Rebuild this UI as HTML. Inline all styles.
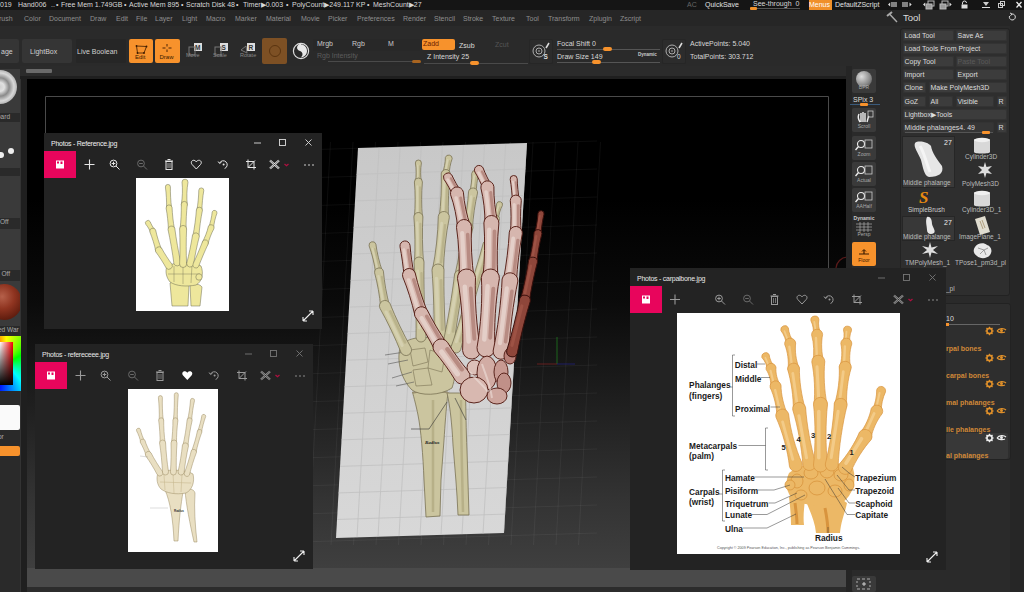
<!DOCTYPE html>
<html><head><meta charset="utf-8">
<style>
*{box-sizing:border-box;margin:0;padding:0}
html,body{width:1024px;height:592px;overflow:hidden;background:#2a2a2a;font-family:"Liberation Sans",sans-serif;color:#ccc}
.a{position:absolute}
.t{position:absolute;white-space:nowrap;line-height:1}
#top{left:0;top:0;width:1024px;height:10px;background:#151515}
#menu{left:0;top:10px;width:1024px;height:16px;background:#262626}
#tb{left:0;top:26px;width:1024px;height:40px;background:#2a2a2a}
#frame{left:20px;top:66px;width:832px;height:526px;background:#2c2c2c}
#canvas{left:27px;top:79px;width:820px;height:489px;background:linear-gradient(#000 0px,#000 120px,#0a0a0a 220px,#202020 330px,#333 420px,#3f3f3f 489px)}
#cbot{left:27px;top:568px;width:820px;height:19px;background:#4a4a4a}
.win{position:absolute;background:#232323}
.win .ttl{position:absolute;left:7px;top:6.5px;font-size:7px;letter-spacing:-0.25px;line-height:1;white-space:nowrap;color:#f2f2f2}
.win .pink{position:absolute;left:0;top:18px;width:32px;height:27px;background:#e8055c}
</style></head><body>

<div id="top" class="a">
 <div class="t" style="left:0;top:0.5px;font-size:7px;color:#d8d8d8">
 <span class="a" style="left:0">019</span><span class="a" style="left:18px">Hand006</span><span class="a" style="left:51px">..</span><span class="a" style="left:56px">&#8226;</span><span class="a" style="left:61px">Free Mem 1.749GB</span><span class="a" style="left:124px">&#8226;</span><span class="a" style="left:129px">Active Mem 895</span><span class="a" style="left:181px">&#8226;</span><span class="a" style="left:186px">Scratch Disk 48</span><span class="a" style="left:236px">&#8226;</span><span class="a" style="left:243px">Timer&#9654;0.003</span><span class="a" style="left:286px">&#8226;</span><span class="a" style="left:292px">PolyCount&#9654;249.117 KP</span><span class="a" style="left:367px">&#8226;</span><span class="a" style="left:373px">MeshCount&#9654;27</span>
 </div>
 <div class="t" style="left:687px;top:0.5px;font-size:7px;color:#666">AC</div>
 <div class="t" style="left:705px;top:0.5px;font-size:7px;color:#e0e0e0">QuickSave</div>
 <div class="t" style="left:753px;top:-0.5px;font-size:7px;color:#d8d8d8">See-through&nbsp;&nbsp;0</div>
 <div class="a" style="left:750px;top:8px;width:50px;height:1px;background:#555"></div>
 <div class="a" style="left:750px;top:7px;width:7px;height:3px;background:#f0902a;border-radius:1px"></div>
 <div class="a" style="left:809px;top:0;width:23px;height:10px;background:#f0902a"></div>
 <div class="t" style="left:809px;top:0.5px;font-size:7px;color:#fff">Menus</div>
 <div class="t" style="left:835px;top:0.5px;font-size:7px;color:#e0e0e0">DefaultZScript</div>
</div>
<div id="menu" class="a">
 <div class="t" style="left:0;top:4.5px;font-size:7px;color:#8e8e8e">
 <span class="a" style="left:-1px">rush</span><span class="a" style="left:24px">Color</span><span class="a" style="left:49px">Document</span><span class="a" style="left:90px">Draw</span><span class="a" style="left:116px">Edit</span><span class="a" style="left:136px">File</span><span class="a" style="left:155px">Layer</span><span class="a" style="left:182px">Light</span><span class="a" style="left:206px">Macro</span><span class="a" style="left:235px">Marker</span><span class="a" style="left:266px">Material</span><span class="a" style="left:301px">Movie</span><span class="a" style="left:328px">Picker</span><span class="a" style="left:357px">Preferences</span><span class="a" style="left:403px">Render</span><span class="a" style="left:434px">Stencil</span><span class="a" style="left:463px">Stroke</span><span class="a" style="left:492px">Texture</span><span class="a" style="left:526px">Tool</span><span class="a" style="left:548px">Transform</span><span class="a" style="left:589px">Zplugin</span><span class="a" style="left:620px">Zscript</span>
 </div>
</div>
<div id="tb" class="a"></div>
<div class="a" style="left:0;top:39px;width:19px;height:24px;background:#353535;border-radius:0 2px 2px 0"></div>
<div class="t" style="left:1px;top:48px;font-size:7px;color:#d0d0d0">age</div>
<div class="a" style="left:22px;top:39px;width:50px;height:24px;background:#353535;border-radius:2px"></div>
<div class="t" style="left:30px;top:48px;font-size:7px;color:#d0d0d0">LightBox</div>
<div class="a" style="left:76px;top:39px;width:50px;height:24px;background:#262626;border-radius:2px"></div>
<div class="t" style="left:77px;top:48px;font-size:7px;color:#d0d0d0">Live Boolean</div>
<div class="a" style="left:129px;top:39px;width:24px;height:24px;background:#f7922c;border-radius:2px"></div>
<div class="a" style="left:155px;top:39px;width:25px;height:24px;background:#f7922c;border-radius:2px"></div>
<svg class="a" style="left:129px;top:39px" width="51" height="24">
 <path d="M7.5 7 L17.5 7.5 L15 14 L8.5 14 Z" fill="none" stroke="#3a1a00" stroke-width="0.8"/><circle cx="7.5" cy="7" r="0.9" fill="#3a1a00"/><circle cx="17.5" cy="7.5" r="0.9" fill="#3a1a00"/><circle cx="15" cy="14" r="0.9" fill="#3a1a00"/><circle cx="8.5" cy="14" r="0.9" fill="#3a1a00"/>
 <text x="6" y="19.8" font-size="6" fill="#3a1a00" font-family="Liberation Sans">Edit</text>
 <path d="M38 5 V7.5 M38 10.5 V13 M33.5 9 H36.5 M39.5 9 H42.5" stroke="#3a1a00" stroke-width="0.9"/>
 <text x="30.5" y="19.8" font-size="6" fill="#3a1a00" font-family="Liberation Sans">Draw</text>
</svg>
<svg class="a" style="left:184px;top:40px" width="74" height="22">
 <rect x="10" y="3" width="8" height="8" fill="#ddd"/><text x="11" y="10" font-size="6.5" font-weight="bold" fill="#333" font-family="Liberation Sans">M</text>
 <rect x="5" y="7" width="6" height="8" fill="none" stroke="#777" stroke-width="1"/>
 <text x="2" y="17.3" font-size="5.5" fill="#888" font-family="Liberation Sans">Move</text>
 <rect x="36" y="3" width="8" height="8" fill="#ddd"/><text x="37.5" y="10" font-size="6.5" font-weight="bold" fill="#333" font-family="Liberation Sans">S</text>
 <rect x="31" y="7" width="6" height="8" fill="none" stroke="#777" stroke-width="1"/>
 <text x="29" y="17.3" font-size="5.5" fill="#888" font-family="Liberation Sans">Scale</text>
 <rect x="63" y="3" width="8" height="8" fill="#ddd"/><text x="64.5" y="10" font-size="6.5" font-weight="bold" fill="#333" font-family="Liberation Sans">R</text>
 <path d="M57 10 L62 6 L63 13 Z" fill="none" stroke="#777" stroke-width="1"/>
 <text x="56" y="17.3" font-size="5.5" fill="#888" font-family="Liberation Sans">Rotate</text>
</svg>
<div class="a" style="left:262px;top:38px;width:25px;height:26px;background:#7d5024;border-radius:2px"></div>
<div class="a" style="left:268.5px;top:44.5px;width:12px;height:12px;border:1px solid #5a3410;border-radius:50%"></div>
<svg class="a" style="left:292px;top:42px" width="18" height="18">
 <circle cx="9" cy="9" r="7.6" fill="#2a2a2a" stroke="#ddd" stroke-width="1.2"/>
 <path d="M9 2.5 C4 3.5 4.5 8 8 9 C11 10 11.5 14 8.5 15.5 C13 15 15 12 15 9 C15 5 12 2.5 9 2.5Z" fill="#e8e8e8"/>
 <path d="M9 2.5 C6 3 5.5 6 7 7.5" fill="none" stroke="#e8e8e8" stroke-width="2"/>
</svg>
<div class="a" style="left:313px;top:39px;width:107px;height:12px;background:#282828"></div>
<div class="t" style="left:317px;top:40.0px;font-size:7px;color:#c8c8c8">Mrgb</div>
<div class="t" style="left:352px;top:40.0px;font-size:7px;color:#c8c8c8">Rgb</div>
<div class="t" style="left:388px;top:40.0px;font-size:7px;color:#c8c8c8">M</div>
<div class="t" style="left:317px;top:52.0px;font-size:7px;color:#5c5c5c">Rgb Intensity</div>
<div class="a" style="left:328px;top:61px;width:92px;height:1px;background:#4a4a4a"></div>
<div class="a" style="left:412px;top:59.5px;width:9px;height:3.5px;background:#a86420;border-radius:2px"></div>
<div class="a" style="left:422px;top:39px;width:33px;height:11px;background:#f7922c;border-radius:2px"></div>
<div class="t" style="left:423px;top:40.0px;font-size:7px;color:#6a2000">Zadd</div>
<div class="t" style="left:459px;top:41.5px;font-size:7px;color:#dcdcdc">Zsub</div>
<div class="t" style="left:495px;top:40.5px;font-size:7px;color:#555">Zcut</div>
<div class="t" style="left:427px;top:53.0px;font-size:7px;color:#d8d8d8">Z Intensity 25</div>
<div class="a" style="left:424px;top:62.5px;width:104px;height:1px;background:#4a4a4a"></div>
<div class="a" style="left:470px;top:61px;width:9px;height:3.5px;background:#f7922c;border-radius:2px"></div>
<div class="a" style="left:529px;top:39px;width:24px;height:25px;background:#2c2c2c;border:1px solid #262626;border-radius:2px"></div>
<svg class="a" style="left:529px;top:39px" width="24" height="25">
 <circle cx="10" cy="12" r="6" fill="none" stroke="#bbb" stroke-width="0.9"/><circle cx="10" cy="12" r="3" fill="none" stroke="#bbb" stroke-width="0.9"/><circle cx="10" cy="12" r="0.8" fill="#bbb"/>
 <path d="M17 9 L20 4" stroke="#ddd" stroke-width="1.5"/>
 <text x="14.5" y="20" font-size="6.5" font-weight="bold" fill="#ddd" font-family="Liberation Sans">S</text>
</svg>
<div class="t" style="left:557px;top:40.0px;font-size:7px;color:#d8d8d8">Focal Shift 0</div>
<div class="a" style="left:557px;top:48.5px;width:103px;height:1px;background:#555"></div>
<div class="a" style="left:603px;top:47px;width:9px;height:3.5px;background:#f7922c;border-radius:2px"></div>
<div class="t" style="left:557px;top:53.0px;font-size:7px;color:#d8d8d8">Draw Size 149</div>
<div class="a" style="left:557px;top:61.5px;width:103px;height:1px;background:#555"></div>
<div class="a" style="left:592px;top:60px;width:9px;height:3.5px;background:#f7922c;border-radius:2px"></div>
<div class="t" style="left:638px;top:52.5px;font-size:4.5px;font-weight:bold;color:#ccc">Dynamic</div>
<div class="a" style="left:662px;top:39px;width:24px;height:25px;background:#2c2c2c;border:1px solid #262626;border-radius:2px"></div>
<svg class="a" style="left:662px;top:39px" width="24" height="25">
 <circle cx="10" cy="12" r="6" fill="none" stroke="#bbb" stroke-width="0.9"/><circle cx="10" cy="12" r="3" fill="none" stroke="#bbb" stroke-width="0.9"/><circle cx="10" cy="12" r="0.8" fill="#bbb"/>
 <path d="M17 9 L20 4" stroke="#ddd" stroke-width="1.5"/>
 <text x="15" y="20" font-size="6.5" fill="#ddd" font-family="Liberation Sans">0</text>
</svg>
<div class="t" style="left:690px;top:40.0px;font-size:7px;color:#d8d8d8">ActivePoints: 5.040</div>
<div class="t" style="left:690px;top:53.0px;font-size:7px;color:#d8d8d8">TotalPoints: 303.712</div>

<div id="frame" class="a"></div>
<div class="a" style="left:20px;top:66px;width:7px;height:526px;background:#1f1f1f;border-left:1px solid #333"></div>
<div class="a" style="left:20px;top:66px;width:832px;height:13px;background:#2b2b2b"></div>
<div class="a" style="left:26px;top:69px;width:26px;height:4px;background:#6a6a6a;border-radius:1px"></div>
<div class="a" style="left:20px;top:76px;width:832px;height:3px;background:#1f1f1f"></div>
<!-- left shelf -->
<div class="a" style="left:0;top:69px;width:20px;height:51px;background:#3a3a3a;overflow:hidden">
  <div class="a" style="left:-17px;top:1px;width:34px;height:34px;border-radius:50%;background:radial-gradient(circle at 50% 50%,#cfcfcf 0,#e0e0e0 18%,#8a8a8a 38%,#d8d8d8 58%,#9a9a9a 80%,#4a4a4a 100%)"></div>
  <div class="a" style="left:0;top:44px;width:20px;height:7px;background:#2a2a2a"></div>
  <div class="t" style="left:-3px;top:45px;font-size:6.5px;color:#aaa">oard</div>
</div>
<div class="a" style="left:0;top:122px;width:20px;height:52px;background:#3a3a3a;overflow:hidden">
  <div class="a" style="left:-2px;top:30px;width:6px;height:6px;border-radius:50%;background:#eee"></div>
  <div class="a" style="left:8px;top:26px;width:6px;height:6px;border-radius:50%;background:#eee"></div>
  <div class="a" style="left:0;top:46px;width:20px;height:6px;background:#2a2a2a"></div>
</div>
<div class="a" style="left:0;top:176px;width:20px;height:50px;background:#3a3a3a;overflow:hidden">
  <div class="a" style="left:0;top:42px;width:20px;height:8px;background:#2a2a2a"></div>
  <div class="t" style="left:0;top:43px;font-size:6.5px;color:#aaa">Off</div>
</div>
<div class="a" style="left:0;top:229px;width:20px;height:49px;background:#3a3a3a;overflow:hidden">
  <div class="a" style="left:0;top:41px;width:20px;height:8px;background:#2a2a2a"></div>
  <div class="t" style="left:-4px;top:42px;font-size:6.5px;color:#aaa">e Off</div>
</div>
<div class="a" style="left:0;top:281px;width:20px;height:54px;background:#3a3a3a;overflow:hidden">
  <div class="a" style="left:-14px;top:3px;width:36px;height:36px;border-radius:50%;background:radial-gradient(circle at 45% 35%,#b5604a 0,#8f3420 40%,#5a1a0c 80%,#3a3a3a 100%)"></div>
  <div class="a" style="left:0;top:45px;width:20px;height:9px;background:#2a2a2a"></div>
  <div class="t" style="left:-2px;top:46px;font-size:6.5px;color:#aaa">ed War</div>
</div>
<div class="a" style="left:0;top:336px;width:21px;height:55px;background:conic-gradient(from 0deg at 30% 50%,#ff0 0deg,#0f0 60deg,#0ff 140deg,#00f 200deg,#f0f 260deg,#f00 320deg,#ff0 360deg)"></div>
<div class="a" style="left:0;top:342px;width:13px;height:43px;background:linear-gradient(to bottom,transparent,#000),linear-gradient(to right,#fff,#f00)"></div>
<div class="a" style="left:0;top:405px;width:20px;height:25px;background:#fafafa;border-radius:0 2px 2px 0"></div>
<div class="t" style="left:-2px;top:434px;font-size:6.5px;color:#aaa">or</div>
<div class="a" style="left:0;top:446px;width:20px;height:10px;background:#f7922c;border-radius:0 2px 2px 0"></div>

<div id="canvas" class="a"></div>
<div id="cbot" class="a"></div>
<svg class="a" style="left:0;top:0" width="1024" height="592"><path d="M847 257 A12 12 0 0 0 836 268" fill="none" stroke="#5a1a1a" stroke-width="1.2"/><path d="M45.5 133V96.5H828.5V268" fill="none" stroke="#4a4a4a" stroke-width="1"/><path d="M330.5 142L308.5 545 M353.0 142L331.0 545 M375.5 142L353.5 545 M398.0 142L376.0 545 M420.5 142L398.5 545 M443.0 142L421.0 545 M465.5 142L443.5 545 M488.0 142L466.0 545 M510.5 142L488.5 545 M533.0 142L511.0 545 M555.5 142L533.5 545 M578.0 142L556.0 545 M600.5 142L578.5 545 M300 150.0L597 141.0 M300 178.0L597 169.0 M300 206.0L597 197.0 M300 234.0L597 225.0 M300 262.0L597 253.0 M300 290.0L597 281.0 M300 318.0L597 309.0 M300 346.0L597 337.0 M300 374.0L597 365.0 M300 402.0L597 393.0 M300 430.0L597 421.0 M300 458.0L597 449.0 M300 486.0L597 477.0 M300 514.0L597 505.0 M300 542.0L597 533.0" stroke="#ffffff" stroke-opacity="0.05" stroke-width="1" fill="none"/><path d="M557 337V364" stroke="#1f7a1f" stroke-width="0.8"/><path d="M537 364H557" stroke="#7a2222" stroke-width="0.8"/><path d="M557 364H575" stroke="#22227a" stroke-width="0.8"/><defs><linearGradient id="pg" x1="0" y1="0" x2="0" y2="1"><stop offset="0" stop-color="#c8c8c8"/><stop offset="1" stop-color="#d8d8d8"/></linearGradient><clipPath id="pc"><polygon points="358,148 527,143 504,533 336,538"/></clipPath></defs><polygon points="358,148 527,143 504,533 336,538" fill="url(#pg)"/><g clip-path="url(#pc)"><path d="M379.1 147.4L357.0 537.4 M400.2 146.8L378.0 536.8 M421.3 146.2L399.0 536.2 M442.4 145.6L420.0 535.6 M463.5 145.0L441.0 535.0 M484.6 144.4L462.0 534.4 M505.7 143.8L483.0 533.8 M526.8 143.2L504.0 533.2 M330 175.2L530 168.8 M330 201.7L530 195.3 M330 228.2L530 221.8 M330 254.7L530 248.3 M330 281.2L530 274.8 M330 307.7L530 301.3 M330 334.2L530 327.8 M330 360.7L530 354.3 M330 387.2L530 380.8 M330 413.7L530 407.3 M330 440.2L530 433.8 M330 466.7L530 460.3 M330 493.2L530 486.8 M330 519.7L530 513.3" stroke="#c0c0c0" stroke-width="0.8" fill="none"/><path d="M412.5 392 L448 392 C446 410 445 425 444 440 L441 480 L440 516 L426 517 L424 480 C423 455 421 430 418 415 C416 405 414 398 412.5 392 Z" fill="#cbc59f" stroke="#7a7254" stroke-width="0.8"/><path d="M447 393 L465.5 393 C466 410 466 430 467 450 L469 515 L458 515 C457 490 455 470 453 445 C452 425 450 405 447 393 Z" fill="#cbc59f" stroke="#7a7254" stroke-width="0.8"/><path d="M412.5 393 C425 390 440 390 448 393" stroke="#9a9070" stroke-width="1.5" fill="none"/><path d="M433 400 C433 430 433 470 433 512 M461 400 C461 430 462 470 463 512" stroke="#aaa27a" stroke-width="2.5" fill="none" opacity="0.6"/><path d="M401 345 C410 336 430 335 446 342 C456 350 458 370 452 388 C440 396 420 396 412 390 C400 378 396 358 401 345Z" fill="#cbc59f" stroke="#7a7254" stroke-width="0.8"/><path d="M410 350 L425 348 L428 362 L413 366Z M430 350 L445 355 L442 372 L428 368Z M413 370 L428 368 L432 385 L416 386Z" fill="none" stroke="#7a7254" stroke-width="0.6"/><path d="M385 355 L405 352 M388 364 L408 360 M392 378 L412 372 M396 386 L414 382" stroke="#555" stroke-width="0.6"/><path d="M369.1 245.8 C372.0 253.7 374.6 264.5 375.6 272.8 A3.5 3.5 0 0 0 382.4 271.2 C379.5 263.3 376.9 252.5 375.9 244.2 A3.5 3.5 0 0 0 369.1 245.8Z" fill="#cbc59f" stroke="#7a7254" stroke-width="0.8"/><line x1="374.8" y1="248.7" x2="379.4" y2="267.6" stroke="#aaa27a" stroke-width="1.5" stroke-linecap="round" opacity="0.5"/><line x1="372.4" y1="248.4" x2="377.4" y2="269.0" stroke="#dcd8bc" stroke-width="1.8" stroke-linecap="round" opacity="0.6"/><path d="M374.6 272.8 C377.4 282.8 379.8 296.4 380.6 306.8 A4.5 4.5 0 0 0 389.4 305.2 C386.6 295.2 384.2 281.6 383.4 271.2 A4.5 4.5 0 0 0 374.6 272.8Z" fill="#cbc59f" stroke="#7a7254" stroke-width="0.8"/><line x1="381.8" y1="276.8" x2="386.0" y2="300.6" stroke="#aaa27a" stroke-width="2.1" stroke-linecap="round" opacity="0.5"/><line x1="378.5" y1="276.3" x2="383.1" y2="302.1" stroke="#dcd8bc" stroke-width="2.4" stroke-linecap="round" opacity="0.6"/><path d="M380.0 308.4 C387.2 321.1 395.6 338.7 401.0 352.4 A5.5 5.5 0 0 0 411.0 347.6 C403.8 334.9 395.4 317.3 390.0 303.6 A5.5 5.5 0 0 0 380.0 308.4Z" fill="#cbc59f" stroke="#7a7254" stroke-width="0.8"/><line x1="390.4" y1="311.5" x2="405.1" y2="342.3" stroke="#aaa27a" stroke-width="2.7" stroke-linecap="round" opacity="0.5"/><line x1="386.1" y1="312.0" x2="402.1" y2="345.4" stroke="#dcd8bc" stroke-width="3.1" stroke-linecap="round" opacity="0.6"/><path d="M415.4 163.0 C416.4 168.7 416.4 176.3 415.4 182.0 A3.0 3.0 0 0 0 421.4 182.0 C420.4 176.3 420.4 168.7 421.4 163.0 A3.0 3.0 0 0 0 415.4 163.0Z" fill="#cbc59f" stroke="#7a7254" stroke-width="0.8"/><line x1="419.5" y1="165.8" x2="419.5" y2="179.2" stroke="#aaa27a" stroke-width="1.2" stroke-linecap="round" opacity="0.5"/><line x1="417.7" y1="165.3" x2="417.7" y2="179.7" stroke="#dcd8bc" stroke-width="1.4" stroke-linecap="round" opacity="0.6"/><path d="M414.4 182.0 C415.4 192.5 415.4 206.5 414.4 217.0 A4.0 4.0 0 0 0 422.4 217.0 C421.4 206.5 421.4 192.5 422.4 182.0 A4.0 4.0 0 0 0 414.4 182.0Z" fill="#cbc59f" stroke="#7a7254" stroke-width="0.8"/><line x1="420.0" y1="187.2" x2="420.0" y2="211.8" stroke="#aaa27a" stroke-width="1.8" stroke-linecap="round" opacity="0.5"/><line x1="417.3" y1="186.2" x2="417.3" y2="212.8" stroke="#dcd8bc" stroke-width="2.1" stroke-linecap="round" opacity="0.6"/><path d="M413.9 217.1 C415.1 230.5 415.3 248.5 414.5 262.1 A4.5 4.5 0 0 0 423.5 261.9 C422.3 248.5 422.1 230.5 422.9 216.9 A4.5 4.5 0 0 0 413.9 217.1Z" fill="#cbc59f" stroke="#7a7254" stroke-width="0.8"/><line x1="420.4" y1="223.7" x2="420.8" y2="255.2" stroke="#aaa27a" stroke-width="2.1" stroke-linecap="round" opacity="0.5"/><line x1="417.2" y1="222.4" x2="417.7" y2="256.6" stroke="#dcd8bc" stroke-width="2.4" stroke-linecap="round" opacity="0.6"/><path d="M414.0 262.1 C415.6 284.6 416.4 314.6 416.0 337.1 A5.0 5.0 0 0 0 426.0 336.9 C424.4 314.4 423.6 284.4 424.0 261.9 A5.0 5.0 0 0 0 414.0 262.1Z" fill="#cbc59f" stroke="#7a7254" stroke-width="0.8"/><line x1="421.5" y1="273.2" x2="422.9" y2="325.7" stroke="#aaa27a" stroke-width="2.4" stroke-linecap="round" opacity="0.5"/><line x1="417.8" y1="271.0" x2="419.4" y2="328.0" stroke="#dcd8bc" stroke-width="2.8" stroke-linecap="round" opacity="0.6"/><path d="M445.4 157.4 C445.4 162.3 444.2 168.7 442.4 173.4 A3.5 3.5 0 0 0 449.2 174.6 C449.2 169.7 450.4 163.3 452.2 158.6 A3.5 3.5 0 0 0 445.4 157.4Z" fill="#cbc59f" stroke="#7a7254" stroke-width="0.8"/><line x1="449.7" y1="160.7" x2="447.6" y2="171.9" stroke="#aaa27a" stroke-width="1.5" stroke-linecap="round" opacity="0.5"/><line x1="447.6" y1="159.8" x2="445.3" y2="171.9" stroke="#dcd8bc" stroke-width="1.8" stroke-linecap="round" opacity="0.6"/><path d="M441.3 173.8 C441.7 186.7 440.9 203.9 439.3 216.8 A4.5 4.5 0 0 0 448.3 217.2 C447.9 204.3 448.7 187.1 450.3 174.2 A4.5 4.5 0 0 0 441.3 173.8Z" fill="#cbc59f" stroke="#7a7254" stroke-width="0.8"/><line x1="447.4" y1="180.5" x2="446.0" y2="210.6" stroke="#aaa27a" stroke-width="2.1" stroke-linecap="round" opacity="0.5"/><line x1="444.3" y1="179.1" x2="442.8" y2="211.8" stroke="#dcd8bc" stroke-width="2.4" stroke-linecap="round" opacity="0.6"/><path d="M438.3 216.4 C438.1 232.5 435.8 253.7 432.5 269.4 A5.5 5.5 0 0 0 443.5 270.6 C443.7 254.5 446.0 233.3 449.3 217.6 A5.5 5.5 0 0 0 438.3 216.4Z" fill="#cbc59f" stroke="#7a7254" stroke-width="0.8"/><line x1="445.1" y1="225.2" x2="441.1" y2="262.3" stroke="#aaa27a" stroke-width="2.4" stroke-linecap="round" opacity="0.5"/><line x1="441.7" y1="223.2" x2="437.3" y2="263.5" stroke="#dcd8bc" stroke-width="2.8" stroke-linecap="round" opacity="0.6"/><path d="M432.0 270.2 C433.6 291.1 434.4 319.1 434.0 340.2 A6.0 6.0 0 0 0 446.0 339.8 C444.4 318.9 443.6 290.9 444.0 269.8 A6.0 6.0 0 0 0 432.0 270.2Z" fill="#cbc59f" stroke="#7a7254" stroke-width="0.8"/><line x1="441.0" y1="280.4" x2="442.4" y2="329.4" stroke="#aaa27a" stroke-width="3.0" stroke-linecap="round" opacity="0.5"/><line x1="436.5" y1="278.4" x2="438.0" y2="331.6" stroke="#dcd8bc" stroke-width="3.5" stroke-linecap="round" opacity="0.6"/><path d="M471.7 173.6 C472.1 179.3 471.2 186.7 469.5 192.1 A3.5 3.5 0 0 0 476.5 192.9 C476.1 187.2 477.0 179.8 478.7 174.4 A3.5 3.5 0 0 0 471.7 173.6Z" fill="#cbc59f" stroke="#7a7254" stroke-width="0.8"/><line x1="476.2" y1="176.9" x2="474.7" y2="189.9" stroke="#aaa27a" stroke-width="1.5" stroke-linecap="round" opacity="0.5"/><line x1="474.1" y1="176.1" x2="472.4" y2="190.2" stroke="#dcd8bc" stroke-width="1.8" stroke-linecap="round" opacity="0.6"/><path d="M468.5 191.9 C468.0 202.3 466.0 216.1 463.5 226.4 A4.5 4.5 0 0 0 472.5 227.6 C473.0 217.2 475.0 203.4 477.5 193.1 A4.5 4.5 0 0 0 468.5 191.9Z" fill="#cbc59f" stroke="#7a7254" stroke-width="0.8"/><line x1="474.2" y1="198.0" x2="470.7" y2="222.1" stroke="#aaa27a" stroke-width="2.1" stroke-linecap="round" opacity="0.5"/><line x1="471.2" y1="196.5" x2="467.4" y2="222.7" stroke="#dcd8bc" stroke-width="2.4" stroke-linecap="round" opacity="0.6"/><path d="M463.1 226.2 C461.7 240.7 458.5 259.9 455.1 274.2 A5.0 5.0 0 0 0 464.9 275.8 C466.3 261.3 469.5 242.1 472.9 227.8 A5.0 5.0 0 0 0 463.1 226.2Z" fill="#cbc59f" stroke="#7a7254" stroke-width="0.8"/><line x1="469.0" y1="234.6" x2="463.4" y2="268.2" stroke="#aaa27a" stroke-width="2.4" stroke-linecap="round" opacity="0.5"/><line x1="465.7" y1="232.5" x2="459.6" y2="269.0" stroke="#dcd8bc" stroke-width="2.8" stroke-linecap="round" opacity="0.6"/><path d="M454.6 274.1 C452.3 294.1 447.9 320.5 443.6 340.1 A5.5 5.5 0 0 0 454.4 341.9 C456.7 321.9 461.1 295.5 465.4 275.9 A5.5 5.5 0 0 0 454.6 274.1Z" fill="#cbc59f" stroke="#7a7254" stroke-width="0.8"/><line x1="460.8" y1="285.3" x2="453.1" y2="331.5" stroke="#aaa27a" stroke-width="2.7" stroke-linecap="round" opacity="0.5"/><line x1="457.1" y1="282.7" x2="448.8" y2="332.8" stroke="#dcd8bc" stroke-width="3.1" stroke-linecap="round" opacity="0.6"/><path d="M496.6 203.8 C496.4 208.3 494.8 214.0 492.6 218.0 A3.0 3.0 0 0 0 498.4 219.6 C498.6 215.1 500.2 209.4 502.4 205.4 A3.0 3.0 0 0 0 496.6 203.8Z" fill="#cbc59f" stroke="#7a7254" stroke-width="0.8"/><line x1="500.0" y1="207.0" x2="497.2" y2="217.0" stroke="#aaa27a" stroke-width="1.2" stroke-linecap="round" opacity="0.5"/><line x1="498.3" y1="206.1" x2="495.3" y2="216.9" stroke="#dcd8bc" stroke-width="1.4" stroke-linecap="round" opacity="0.6"/><path d="M491.7 217.6 C490.2 225.8 487.0 236.3 483.6 243.8 A4.0 4.0 0 0 0 491.2 246.2 C492.7 238.0 495.9 227.5 499.3 220.0 A4.0 4.0 0 0 0 491.7 217.6Z" fill="#cbc59f" stroke="#7a7254" stroke-width="0.8"/><line x1="495.9" y1="223.2" x2="490.2" y2="241.6" stroke="#aaa27a" stroke-width="1.8" stroke-linecap="round" opacity="0.5"/><line x1="493.5" y1="221.6" x2="487.4" y2="241.5" stroke="#dcd8bc" stroke-width="2.1" stroke-linecap="round" opacity="0.6"/><path d="M483.1 243.6 C478.8 260.4 471.9 282.4 465.7 298.6 A4.5 4.5 0 0 0 474.3 301.4 C478.6 284.6 485.5 262.6 491.7 246.4 A4.5 4.5 0 0 0 483.1 243.6Z" fill="#cbc59f" stroke="#7a7254" stroke-width="0.8"/><line x1="486.6" y1="253.8" x2="474.4" y2="292.3" stroke="#aaa27a" stroke-width="2.1" stroke-linecap="round" opacity="0.5"/><line x1="484.1" y1="251.2" x2="470.9" y2="293.0" stroke="#dcd8bc" stroke-width="2.4" stroke-linecap="round" opacity="0.6"/><path d="M465.2 298.6 C462.0 313.3 456.4 332.5 451.2 346.6 A5.0 5.0 0 0 0 460.8 349.4 C464.0 334.7 469.6 315.5 474.8 301.4 A5.0 5.0 0 0 0 465.2 298.6Z" fill="#cbc59f" stroke="#7a7254" stroke-width="0.8"/><line x1="470.0" y1="307.8" x2="460.2" y2="341.4" stroke="#aaa27a" stroke-width="2.4" stroke-linecap="round" opacity="0.5"/><line x1="467.0" y1="305.4" x2="456.3" y2="341.8" stroke="#dcd8bc" stroke-width="2.8" stroke-linecap="round" opacity="0.6"/><text x="425" y="444" font-size="5" font-family="Liberation Serif" font-style="italic" font-weight="bold" fill="#222">Radius</text><path d="M411 429H429L447 402 M455 398 L466 420" stroke="#333" stroke-width="0.6" fill="none"/></g><path d="M400.0 246.7 C401.7 255.3 403.3 266.9 404.0 275.7 A5.0 5.0 0 0 0 414.0 274.3 C412.3 265.7 410.7 254.1 410.0 245.3 A5.0 5.0 0 0 0 400.0 246.7Z" fill="#d6b6ae" stroke="#5a241c" stroke-width="1"/><line x1="408.1" y1="250.0" x2="410.9" y2="270.3" stroke="#9a6258" stroke-width="2.7" stroke-linecap="round" opacity="0.5"/><line x1="403.9" y1="249.7" x2="407.0" y2="271.7" stroke="#eee0da" stroke-width="3.1" stroke-linecap="round" opacity="0.6"/><path d="M402.8 277.0 C407.4 288.1 412.2 303.3 414.8 315.0 A6.5 6.5 0 0 0 427.2 311.0 C422.6 299.9 417.8 284.7 415.2 273.0 A6.5 6.5 0 0 0 402.8 277.0Z" fill="#d6b6ae" stroke="#5a241c" stroke-width="1"/><line x1="413.7" y1="279.8" x2="422.1" y2="306.4" stroke="#9a6258" stroke-width="3.3" stroke-linecap="round" opacity="0.5"/><line x1="408.6" y1="280.1" x2="417.7" y2="309.0" stroke="#eee0da" stroke-width="3.8" stroke-linecap="round" opacity="0.6"/><path d="M415.0 316.5 C421.8 326.2 429.8 339.8 435.0 350.5 A7.0 7.0 0 0 0 447.0 343.5 C440.2 333.8 432.2 320.2 427.0 309.5 A7.0 7.0 0 0 0 415.0 316.5Z" fill="#d6b6ae" stroke="#5a241c" stroke-width="1"/><line x1="426.8" y1="316.4" x2="440.8" y2="340.2" stroke="#9a6258" stroke-width="3.6" stroke-linecap="round" opacity="0.5"/><line x1="421.6" y1="318.1" x2="436.8" y2="344.0" stroke="#eee0da" stroke-width="4.2" stroke-linecap="round" opacity="0.6"/><path d="M434.5 351.7 C441.6 359.8 450.0 371.4 455.5 380.7 A8.0 8.0 0 0 0 468.5 371.3 C461.4 363.2 453.0 351.6 447.5 342.3 A8.0 8.0 0 0 0 434.5 351.7Z" fill="#d6b6ae" stroke="#5a241c" stroke-width="1"/><line x1="447.3" y1="349.1" x2="462.0" y2="369.4" stroke="#9a6258" stroke-width="4.2" stroke-linecap="round" opacity="0.5"/><line x1="441.5" y1="351.9" x2="457.5" y2="374.0" stroke="#eee0da" stroke-width="4.9" stroke-linecap="round" opacity="0.6"/><path d="M443.9 179.2 C447.1 183.9 450.7 190.5 453.1 195.7 A4.5 4.5 0 0 0 460.9 191.3 C457.7 186.6 454.1 180.0 451.7 174.8 A4.5 4.5 0 0 0 443.9 179.2Z" fill="#d6b6ae" stroke="#5a241c" stroke-width="1"/><line x1="451.1" y1="178.4" x2="457.5" y2="190.0" stroke="#9a6258" stroke-width="2.4" stroke-linecap="round" opacity="0.5"/><line x1="447.7" y1="179.7" x2="454.7" y2="192.2" stroke="#eee0da" stroke-width="2.8" stroke-linecap="round" opacity="0.6"/><path d="M450.6 194.8 C454.2 204.6 457.0 218.0 457.6 228.3 A6.5 6.5 0 0 0 470.4 225.7 C466.8 215.9 464.0 202.5 463.4 192.2 A6.5 6.5 0 0 0 450.6 194.8Z" fill="#d6b6ae" stroke="#5a241c" stroke-width="1"/><line x1="460.7" y1="198.0" x2="465.6" y2="221.4" stroke="#9a6258" stroke-width="3.0" stroke-linecap="round" opacity="0.5"/><line x1="456.1" y1="197.9" x2="461.4" y2="223.3" stroke="#eee0da" stroke-width="3.5" stroke-linecap="round" opacity="0.6"/><path d="M456.5 227.4 C458.8 242.6 459.8 263.0 459.0 278.4 A7.5 7.5 0 0 0 474.0 277.6 C471.7 262.4 470.7 242.0 471.5 226.6 A7.5 7.5 0 0 0 456.5 227.4Z" fill="#d6b6ae" stroke="#5a241c" stroke-width="1"/><line x1="467.7" y1="234.5" x2="469.4" y2="270.2" stroke="#9a6258" stroke-width="3.6" stroke-linecap="round" opacity="0.5"/><line x1="462.2" y1="233.2" x2="464.1" y2="272.0" stroke="#eee0da" stroke-width="4.2" stroke-linecap="round" opacity="0.6"/><path d="M457.5 278.6 C461.5 300.1 463.6 328.9 462.6 350.6 A9.0 9.0 0 0 0 480.6 349.4 C476.6 327.9 474.5 299.1 475.5 277.4 A9.0 9.0 0 0 0 457.5 278.6Z" fill="#d6b6ae" stroke="#5a241c" stroke-width="1"/><line x1="470.8" y1="288.5" x2="474.4" y2="338.9" stroke="#9a6258" stroke-width="3.9" stroke-linecap="round" opacity="0.5"/><line x1="464.8" y1="286.8" x2="468.7" y2="341.5" stroke="#eee0da" stroke-width="4.5" stroke-linecap="round" opacity="0.6"/><path d="M474.9 172.0 C477.9 177.0 481.3 183.9 483.3 189.4 A4.5 4.5 0 0 0 491.5 185.4 C488.5 180.4 485.1 173.5 483.1 168.0 A4.5 4.5 0 0 0 474.9 172.0Z" fill="#d6b6ae" stroke="#5a241c" stroke-width="1"/><line x1="482.2" y1="171.7" x2="488.1" y2="183.8" stroke="#9a6258" stroke-width="2.4" stroke-linecap="round" opacity="0.5"/><line x1="478.7" y1="172.7" x2="485.1" y2="185.9" stroke="#eee0da" stroke-width="2.8" stroke-linecap="round" opacity="0.6"/><path d="M480.9 188.1 C483.6 198.6 485.2 212.9 484.9 223.7 A6.5 6.5 0 0 0 497.9 222.3 C495.2 211.8 493.6 197.5 493.9 186.7 A6.5 6.5 0 0 0 480.9 188.1Z" fill="#d6b6ae" stroke="#5a241c" stroke-width="1"/><line x1="490.7" y1="192.4" x2="493.5" y2="217.4" stroke="#9a6258" stroke-width="3.0" stroke-linecap="round" opacity="0.5"/><line x1="486.1" y1="191.9" x2="489.2" y2="218.9" stroke="#eee0da" stroke-width="3.5" stroke-linecap="round" opacity="0.6"/><path d="M483.9 222.9 C485.1 239.4 484.7 261.4 482.9 277.9 A7.5 7.5 0 0 0 497.9 278.1 C496.7 261.6 497.1 239.6 498.9 223.1 A7.5 7.5 0 0 0 483.9 222.9Z" fill="#d6b6ae" stroke="#5a241c" stroke-width="1"/><line x1="494.5" y1="231.3" x2="493.8" y2="269.8" stroke="#9a6258" stroke-width="3.6" stroke-linecap="round" opacity="0.5"/><line x1="489.2" y1="229.6" x2="488.4" y2="271.4" stroke="#eee0da" stroke-width="4.2" stroke-linecap="round" opacity="0.6"/><path d="M481.4 277.4 C482.6 298.6 480.8 326.6 477.0 347.4 A9.0 9.0 0 0 0 495.0 348.6 C493.8 327.4 495.6 299.4 499.4 278.6 A9.0 9.0 0 0 0 481.4 277.4Z" fill="#d6b6ae" stroke="#5a241c" stroke-width="1"/><line x1="493.3" y1="288.7" x2="490.2" y2="337.7" stroke="#9a6258" stroke-width="3.9" stroke-linecap="round" opacity="0.5"/><line x1="487.6" y1="286.3" x2="484.3" y2="339.5" stroke="#eee0da" stroke-width="4.5" stroke-linecap="round" opacity="0.6"/><path d="M510.2 179.3 C511.3 185.8 512.2 194.4 512.3 200.9 A3.5 3.5 0 0 0 519.3 200.3 C518.2 193.8 517.3 185.2 517.2 178.7 A3.5 3.5 0 0 0 510.2 179.3Z" fill="#d6b6ae" stroke="#5a241c" stroke-width="1"/><line x1="515.7" y1="182.1" x2="517.1" y2="197.2" stroke="#9a6258" stroke-width="1.8" stroke-linecap="round" opacity="0.5"/><line x1="512.9" y1="181.7" x2="514.5" y2="198.1" stroke="#eee0da" stroke-width="2.1" stroke-linecap="round" opacity="0.6"/><path d="M510.3 200.6 C511.3 210.3 511.3 223.3 510.3 233.0 A5.5 5.5 0 0 0 521.3 233.0 C520.3 223.3 520.3 210.3 521.3 200.6 A5.5 5.5 0 0 0 510.3 200.6Z" fill="#d6b6ae" stroke="#5a241c" stroke-width="1"/><line x1="518.3" y1="205.5" x2="518.3" y2="228.1" stroke="#9a6258" stroke-width="2.7" stroke-linecap="round" opacity="0.5"/><line x1="514.2" y1="204.5" x2="514.2" y2="229.1" stroke="#eee0da" stroke-width="3.1" stroke-linecap="round" opacity="0.6"/><path d="M509.3 232.2 C508.6 246.4 506.3 265.2 503.5 279.2 A6.5 6.5 0 0 0 516.5 280.8 C517.2 266.6 519.5 247.8 522.3 233.8 A6.5 6.5 0 0 0 509.3 232.2Z" fill="#d6b6ae" stroke="#5a241c" stroke-width="1"/><line x1="517.9" y1="240.4" x2="513.9" y2="273.3" stroke="#9a6258" stroke-width="3.3" stroke-linecap="round" opacity="0.5"/><line x1="513.2" y1="238.4" x2="508.8" y2="274.1" stroke="#eee0da" stroke-width="3.8" stroke-linecap="round" opacity="0.6"/><path d="M502.1 279.0 C501.3 300.9 497.7 329.7 493.1 351.0 A8.0 8.0 0 0 0 508.9 353.0 C509.7 331.1 513.3 302.3 517.9 281.0 A8.0 8.0 0 0 0 502.1 279.0Z" fill="#d6b6ae" stroke="#5a241c" stroke-width="1"/><line x1="511.9" y1="291.2" x2="505.6" y2="341.6" stroke="#9a6258" stroke-width="3.6" stroke-linecap="round" opacity="0.5"/><line x1="506.8" y1="288.4" x2="500.0" y2="343.1" stroke="#eee0da" stroke-width="4.2" stroke-linecap="round" opacity="0.6"/><ellipse cx="510" cy="356" rx="6" ry="8" fill="#b88078" stroke="#5a241c" stroke-width="1"/><ellipse cx="474.5" cy="367.5" rx="7.5" ry="7.5" fill="#dcc0b8" stroke="#5a241c" stroke-width="1"/><ellipse cx="487" cy="373" rx="10" ry="17" fill="#d2aca4" stroke="#5a241c" stroke-width="1"/><ellipse cx="501" cy="372" rx="7" ry="12" fill="#c89a92" stroke="#5a241c" stroke-width="1"/><ellipse cx="504" cy="383" rx="7" ry="10" fill="#c09088" stroke="#5a241c" stroke-width="1"/><ellipse cx="497" cy="396" rx="10" ry="8" fill="#cea69e" stroke="#5a241c" stroke-width="1"/><ellipse cx="474" cy="390" rx="14" ry="13" fill="#d8b8b0" stroke="#5a241c" stroke-width="1"/><path d="M470 372 C476 380 484 386 488 392 M482 364 C486 376 490 384 492 398" stroke="#eee0da" stroke-width="2" opacity="0.6" fill="none"/><path d="M538.0 213.2 C537.6 219.1 536.4 226.8 535.0 232.5 A3.0 3.0 0 0 0 541.0 233.5 C541.4 227.6 542.6 219.9 544.0 214.2 A3.0 3.0 0 0 0 538.0 213.2Z" fill="#8e463a" stroke="#3a100c" stroke-width="1"/><line x1="539.8" y1="215.9" x2="537.5" y2="230.5" stroke="#a85a4c" stroke-width="1.8" stroke-linecap="round" opacity="0.6"/><path d="M534.1 232.3 C533.3 241.0 531.3 252.3 529.1 260.7 A4.0 4.0 0 0 0 536.9 262.1 C537.7 253.4 539.7 242.1 541.9 233.7 A4.0 4.0 0 0 0 534.1 232.3Z" fill="#8e463a" stroke="#3a100c" stroke-width="1"/><line x1="536.3" y1="236.2" x2="532.5" y2="257.8" stroke="#a85a4c" stroke-width="2.3" stroke-linecap="round" opacity="0.6"/><path d="M528.6 260.5 C526.9 272.2 523.7 287.7 520.6 299.1 A4.5 4.5 0 0 0 529.4 300.9 C531.1 289.2 534.3 273.7 537.4 262.3 A4.5 4.5 0 0 0 528.6 260.5Z" fill="#8e463a" stroke="#3a100c" stroke-width="1"/><line x1="530.8" y1="265.8" x2="524.7" y2="295.1" stroke="#a85a4c" stroke-width="2.6" stroke-linecap="round" opacity="0.6"/><path d="M519.7 298.7 C516.7 314.5 511.5 335.3 506.7 350.7 A5.5 5.5 0 0 0 517.3 353.3 C520.3 337.5 525.5 316.7 530.3 301.3 A5.5 5.5 0 0 0 519.7 298.7Z" fill="#8e463a" stroke="#3a100c" stroke-width="1"/><line x1="521.9" y1="305.9" x2="512.0" y2="345.4" stroke="#a85a4c" stroke-width="3.1" stroke-linecap="round" opacity="0.6"/></svg>
<div class="a" style="left:876px;top:26px;width:148px;height:566px;background:#2a2a2a"></div><div class="a" style="left:1010px;top:26px;width:14px;height:566px;background:#262626"></div><div class="a" style="left:846px;top:66px;width:6px;height:526px;background:#252525"></div><div class="t" style="left:903px;top:13px;font-size:9.5px;color:#dedede">Tool</div><svg class="a" style="left:1007px;top:12px" width="10" height="10"><path d="M2.5 4 A3 3 0 1 0 5 2" fill="none" stroke="#ddd" stroke-width="1"/><path d="M3 1 L5 2 L3.5 3.8" fill="none" stroke="#ddd" stroke-width="1"/></svg><svg class="a" style="left:880px;top:0" width="144" height="10"><path d="M8 4.5l2.2-2v4z" fill="#ddd"/><path d="M12 2v5M14 2v5M16 2v5" stroke="#ccc" stroke-width="1.2"/><path d="M23 2v5M25 2v5M27 2v5" stroke="#ccc" stroke-width="1.2"/><path d="M29.5 2.5l2.2 2-2.2 2z" fill="#ddd"/><path d="M43 4.5l2.2-2v4z" fill="#ddd"/><rect x="48" y="1" width="6" height="5" fill="none" stroke="#bbb" stroke-width="1"/><rect x="46" y="4" width="6" height="5" fill="#999" stroke="#bbb" stroke-width="1"/><rect x="62" y="1" width="6" height="5" fill="none" stroke="#bbb" stroke-width="1"/><rect x="60" y="4" width="6" height="5" fill="#999" stroke="#bbb" stroke-width="1"/><path d="M69.5 2.5l2.2 2-2.2 2z" fill="#ddd"/><path d="M82.5 4.5V3A2 2 0 0 1 86.5 3" fill="none" stroke="#ddd" stroke-width="1"/><rect x="81.5" y="4.5" width="6" height="4" fill="#ddd"/><path d="M102 7.5h8" stroke="#ddd" stroke-width="1"/><path d="M103 2h6l-3 4z" fill="#ccc"/><rect x="118.5" y="3.5" width="4" height="4" fill="none" stroke="#ccc"/><rect x="120.5" y="1.5" width="4" height="4" fill="none" stroke="#ccc"/><path d="M136.5 2l5 5.5M141.5 2l-5 5.5" stroke="#eee" stroke-width="1.3"/></svg><svg class="a" style="left:885px;top:10px" width="16" height="16"><path d="M2 6 L7 2" stroke="#aaa" stroke-width="2"/><path d="M4.5 4 L12 12" stroke="#aaa" stroke-width="1.4"/></svg><div class="a" style="left:900px;top:28px;width:110px;height:268px;background:#2e2e2e;border:1px solid #222;border-radius:3px"></div><div class="a" style="left:903px;top:30px;width:51px;height:11px;background:#3c3c3c;border-radius:2px;box-shadow:inset 0 0 0 1px #333"></div><div class="t" style="left:904.5px;top:32px;font-size:7px;color:#dcdcdc">Load Tool</div><div class="a" style="left:956px;top:30px;width:51px;height:11px;background:#3c3c3c;border-radius:2px;box-shadow:inset 0 0 0 1px #333"></div><div class="t" style="left:957.5px;top:32px;font-size:7px;color:#dcdcdc">Save As</div><div class="a" style="left:903px;top:43px;width:104px;height:11px;background:#3c3c3c;border-radius:2px;box-shadow:inset 0 0 0 1px #333"></div><div class="t" style="left:904.5px;top:45px;font-size:7px;color:#dcdcdc">Load Tools From Project</div><div class="a" style="left:903px;top:56px;width:51px;height:11px;background:#3c3c3c;border-radius:2px;box-shadow:inset 0 0 0 1px #333"></div><div class="t" style="left:904.5px;top:58px;font-size:7px;color:#dcdcdc">Copy Tool</div><div class="a" style="left:956px;top:56px;width:51px;height:11px;background:#3c3c3c;border-radius:2px;box-shadow:inset 0 0 0 1px #333"></div><div class="t" style="left:957.5px;top:58px;font-size:7px;color:#5a5a5a">Paste Tool</div><div class="a" style="left:903px;top:69px;width:51px;height:11px;background:#3c3c3c;border-radius:2px;box-shadow:inset 0 0 0 1px #333"></div><div class="t" style="left:904.5px;top:71px;font-size:7px;color:#dcdcdc">Import</div><div class="a" style="left:956px;top:69px;width:51px;height:11px;background:#3c3c3c;border-radius:2px;box-shadow:inset 0 0 0 1px #333"></div><div class="t" style="left:957.5px;top:71px;font-size:7px;color:#dcdcdc">Export</div><div class="a" style="left:903px;top:82px;width:23px;height:11px;background:#3c3c3c;border-radius:2px;box-shadow:inset 0 0 0 1px #333"></div><div class="t" style="left:904.5px;top:84px;font-size:7px;color:#dcdcdc">Clone</div><div class="a" style="left:929px;top:82px;width:78px;height:11px;background:#3c3c3c;border-radius:2px;box-shadow:inset 0 0 0 1px #333"></div><div class="t" style="left:930.5px;top:84px;font-size:7px;color:#dcdcdc">Make PolyMesh3D</div><div class="a" style="left:903px;top:96px;width:23px;height:11px;background:#3c3c3c;border-radius:2px;box-shadow:inset 0 0 0 1px #333"></div><div class="t" style="left:904.5px;top:98px;font-size:7px;color:#dcdcdc">GoZ</div><div class="a" style="left:929px;top:96px;width:24px;height:11px;background:#3c3c3c;border-radius:2px;box-shadow:inset 0 0 0 1px #333"></div><div class="t" style="left:930.5px;top:98px;font-size:7px;color:#dcdcdc">All</div><div class="a" style="left:956px;top:96px;width:38px;height:11px;background:#3c3c3c;border-radius:2px;box-shadow:inset 0 0 0 1px #333"></div><div class="t" style="left:957.5px;top:98px;font-size:7px;color:#dcdcdc">Visible</div><div class="a" style="left:997px;top:96px;width:10px;height:11px;background:#3c3c3c;border-radius:2px;box-shadow:inset 0 0 0 1px #333"></div><div class="t" style="left:998.5px;top:98px;font-size:7px;color:#dcdcdc">R</div><div class="a" style="left:903px;top:109px;width:104px;height:11px;background:#3c3c3c;border-radius:2px;box-shadow:inset 0 0 0 1px #333"></div><div class="t" style="left:904.5px;top:111px;font-size:7px;color:#dcdcdc">Lightbox&#9654;Tools</div><div class="a" style="left:903px;top:122px;width:91px;height:11px;background:#363636;border-radius:2px;box-shadow:inset 0 0 0 1px #333"></div><div class="t" style="left:904.5px;top:124px;font-size:7px;color:#dcdcdc">Middle phalanges4. 49</div><div class="a" style="left:997px;top:122px;width:10px;height:11px;background:#3c3c3c;border-radius:2px;box-shadow:inset 0 0 0 1px #333"></div><div class="t" style="left:998.5px;top:124px;font-size:7px;color:#dcdcdc">R</div><div class="a" style="left:905px;top:132px;width:88px;height:1px;background:#555"></div><div class="a" style="left:982px;top:131px;width:8px;height:3px;background:#f7922c;border-radius:1px"></div><div class="a" style="left:902px;top:136px;width:53px;height:52px;background:#3a3a3a;border:1px solid #262626"></div><svg class="a" style="left:902px;top:136px" width="53" height="52"><path d="M13 7 C16 4 26 6 29 10 C30 17 35 23 40 30 C42 37 37 41 27 41 C22 40 21 31 19 24 C17 18 11 11 13 7Z" fill="#e6e6e6"/><path d="M18 10 C22 16 24 26 28 36" stroke="#ffffff" stroke-width="3" fill="none" opacity="0.6"/></svg><div class="t" style="left:944px;top:139px;font-size:7px;color:#eee">27</div><div class="t" style="left:903px;top:180px;font-size:6.5px;color:#bbb">Middle phalange</div><svg class="a" style="left:970px;top:136px" width="24" height="20"><path d="M4 4 C4 2 20 2 20 4 V16 C20 18 4 18 4 16Z" fill="#d8d8d8"/><ellipse cx="12" cy="4" rx="8" ry="2.2" fill="#f0f0f0"/></svg><div class="t" style="left:965px;top:154px;font-size:6.5px;color:#bbb">Cylinder3D</div><svg class="a" style="left:978px;top:162px" width="14" height="16"><path d="M7 0 L8.5 5 L14 4 L10 8 L14 12 L8.5 11 L7 16 L5.5 11 L0 12 L4 8 L0 4 L5.5 5Z" fill="#ddd"/></svg><div class="t" style="left:962px;top:180.5px;font-size:6.5px;color:#bbb">PolyMesh3D</div><div class="t" style="left:919px;top:189px;font-size:17px;font-weight:bold;font-style:italic;color:#e88a10;font-family:'Liberation Serif',serif">S</div><div class="t" style="left:908px;top:207px;font-size:6.5px;color:#ccc">SimpleBrush</div><svg class="a" style="left:970px;top:189px" width="24" height="20"><path d="M4 4 C4 2 20 2 20 4 V16 C20 18 4 18 4 16Z" fill="#d8d8d8"/><ellipse cx="12" cy="4" rx="8" ry="2.2" fill="#f0f0f0"/></svg><div class="t" style="left:962px;top:207px;font-size:6.5px;color:#bbb">Cylinder3D_1</div><div class="a" style="left:902px;top:216px;width:53px;height:25px;background:#383838;border:1px solid #262626"></div><svg class="a" style="left:922px;top:216px" width="16" height="20"><path d="M5 1 C8 0 10 3 10 8 C11 12 14 15 12 17 C9 19 5 18 5 14 C5 10 3 5 5 1Z" fill="#e8e8e8"/></svg><div class="t" style="left:944px;top:219px;font-size:7px;color:#eee">27</div><div class="t" style="left:903px;top:234px;font-size:6.5px;color:#bbb">Middle phalange</div><svg class="a" style="left:972px;top:215px" width="20" height="22"><path d="M3 4 L13 1 L18 17 L8 20Z" fill="#e0ddd0"/><path d="M8 6 L11 14 M10 5 L13 13" stroke="#b0a080" stroke-width="1"/></svg><div class="t" style="left:959px;top:234px;font-size:6.5px;color:#bbb">ImagePlane_1</div><svg class="a" style="left:922px;top:242px" width="16" height="16"><path d="M8 0 L9.5 5.5 L16 4 L11 8 L16 12 L9.5 10.5 L8 16 L6.5 10.5 L0 12 L5 8 L0 4 L6.5 5.5Z" fill="#ddd"/></svg><div class="t" style="left:905px;top:260px;font-size:6.5px;color:#bbb">TMPolyMesh_1</div><svg class="a" style="left:972px;top:242px" width="22" height="17"><path d="M3 5 C5 1 12 0 15 3 C19 4 21 9 18 13 C15 17 8 17 5 14 C1 11 1 8 3 5Z" fill="#e8e8e8"/><path d="M6 6 L12 8 L16 6 M8 12 L12 8 L14 13" stroke="#888" stroke-width="0.8" fill="none"/></svg><div class="t" style="left:955px;top:260px;font-size:6.5px;color:#bbb">TPose1_pm3d_pl</div><div class="t" style="left:946px;top:286px;font-size:6.5px;color:#bbb">_pl</div><div class="a" style="left:900px;top:303px;width:111px;height:157px;background:#2e2e2e;border:1px solid #222;border-radius:3px"></div><div class="t" style="left:946px;top:315px;font-size:7px;color:#ddd">10</div><div class="a" style="left:946px;top:324px;width:54px;height:1px;background:#666"></div><div class="a" style="left:946px;top:323px;width:3px;height:3px;background:#f7922c"></div><div class="a" style="left:946px;top:433px;width:62px;height:26px;background:#383838;border-radius:2px"></div><div class="t" style="left:946px;top:345px;font-size:7px;font-weight:bold;color:#d08838">rpal bones</div><div class="t" style="left:946px;top:372px;font-size:7px;font-weight:bold;color:#d08838">carpal bones</div><div class="t" style="left:946px;top:399px;font-size:7px;font-weight:bold;color:#d08838">mal phalanges</div><div class="t" style="left:946px;top:425.5px;font-size:7px;font-weight:bold;color:#d08838">lle phalanges</div><div class="t" style="left:946px;top:452px;font-size:7px;font-weight:bold;color:#d08838">al phalanges</div><svg class="a" style="left:984px;top:326px" width="24" height="10"><circle cx="5.5" cy="5" r="2.6" fill="none" stroke="#e0902a" stroke-width="1.6"/><path d="M5.5 0.8v1.6M5.5 7.6v1.6M1.3 5h1.6M8.1 5h1.6M2.5 2l1.1 1.1M7.4 6.9l1.1 1.1M2.5 8l1.1-1.1M7.4 3.1l1.1-1.1" stroke="#e0902a" stroke-width="1.2"/><path d="M13 5 C15 2 20 2 22 4 M13 5 C15 7 19 7 21 6" fill="none" stroke="#e0902a" stroke-width="1.1"/><circle cx="17.5" cy="4.6" r="1.5" fill="#e0902a"/></svg><svg class="a" style="left:984px;top:352.5px" width="24" height="10"><circle cx="5.5" cy="5" r="2.6" fill="none" stroke="#e0902a" stroke-width="1.6"/><path d="M5.5 0.8v1.6M5.5 7.6v1.6M1.3 5h1.6M8.1 5h1.6M2.5 2l1.1 1.1M7.4 6.9l1.1 1.1M2.5 8l1.1-1.1M7.4 3.1l1.1-1.1" stroke="#e0902a" stroke-width="1.2"/><path d="M13 5 C15 2 20 2 22 4 M13 5 C15 7 19 7 21 6" fill="none" stroke="#e0902a" stroke-width="1.1"/><circle cx="17.5" cy="4.6" r="1.5" fill="#e0902a"/></svg><svg class="a" style="left:984px;top:379px" width="24" height="10"><circle cx="5.5" cy="5" r="2.6" fill="none" stroke="#e0902a" stroke-width="1.6"/><path d="M5.5 0.8v1.6M5.5 7.6v1.6M1.3 5h1.6M8.1 5h1.6M2.5 2l1.1 1.1M7.4 6.9l1.1 1.1M2.5 8l1.1-1.1M7.4 3.1l1.1-1.1" stroke="#e0902a" stroke-width="1.2"/><path d="M13 5 C15 2 20 2 22 4 M13 5 C15 7 19 7 21 6" fill="none" stroke="#e0902a" stroke-width="1.1"/><circle cx="17.5" cy="4.6" r="1.5" fill="#e0902a"/></svg><svg class="a" style="left:984px;top:406px" width="24" height="10"><circle cx="5.5" cy="5" r="2.6" fill="none" stroke="#e0902a" stroke-width="1.6"/><path d="M5.5 0.8v1.6M5.5 7.6v1.6M1.3 5h1.6M8.1 5h1.6M2.5 2l1.1 1.1M7.4 6.9l1.1 1.1M2.5 8l1.1-1.1M7.4 3.1l1.1-1.1" stroke="#e0902a" stroke-width="1.2"/><path d="M13 5 C15 2 20 2 22 4 M13 5 C15 7 19 7 21 6" fill="none" stroke="#e0902a" stroke-width="1.1"/><circle cx="17.5" cy="4.6" r="1.5" fill="#e0902a"/></svg><svg class="a" style="left:984px;top:432.5px" width="24" height="10"><circle cx="5.5" cy="5" r="2.6" fill="none" stroke="#eeeeee" stroke-width="1.6"/><path d="M5.5 0.8v1.6M5.5 7.6v1.6M1.3 5h1.6M8.1 5h1.6M2.5 2l1.1 1.1M7.4 6.9l1.1 1.1M2.5 8l1.1-1.1M7.4 3.1l1.1-1.1" stroke="#eeeeee" stroke-width="1.2"/><path d="M13 5 C15 2 20 2 22 4 M13 5 C15 7 19 7 21 6" fill="none" stroke="#eeeeee" stroke-width="1.1"/><circle cx="17.5" cy="4.6" r="1.5" fill="#eeeeee"/></svg><div class="a" style="left:852px;top:69px;width:24px;height:24px;background:#3a3a3a;border-radius:2px"></div><div class="a" style="left:856px;top:71px;width:16px;height:16px;border-radius:50%;background:radial-gradient(circle at 35% 35%,#ddd,#888 60%,#444)"></div><div class="t" style="left:852px;width:24px;text-align:center;top:85px;font-size:5px;color:#aaa">BPR</div><div class="t" style="left:853px;top:96px;font-size:7px;color:#ddd">SPix 3</div><div class="a" style="left:850px;top:104px;width:30px;height:1px;background:#3a5a7a"></div><div class="a" style="left:860px;top:103px;width:8px;height:3px;background:#f7922c;border-radius:1px"></div><div class="a" style="left:852px;top:108px;width:24px;height:24px;background:#3a3a3a;border-radius:2px"></div><div class="t" style="left:852px;width:24px;text-align:center;top:124px;font-size:5px;color:#aaa">Scroll</div><svg class="a" style="left:856px;top:110px" width="18" height="14"><path d="M4 12 C2 9 2 6 3 4 M5 12 V3 M7 12 V2 M9 12 V3 M11 12 C12 9 12 7 13 6" stroke="#eee" stroke-width="1.4" fill="none"/><rect x="12" y="1" width="5" height="6" fill="none" stroke="#ccc" stroke-width="0.8"/></svg><div class="a" style="left:852px;top:136px;width:24px;height:24px;background:#3a3a3a;border-radius:2px"></div><div class="t" style="left:852px;width:24px;text-align:center;top:152px;font-size:5px;color:#aaa">Zoom</div><svg class="a" style="left:855px;top:138px" width="18" height="14"><circle cx="6" cy="6" r="3.5" fill="none" stroke="#eee" stroke-width="1.1"/><path d="M3.5 8.5 L0.5 12" stroke="#eee" stroke-width="1.4"/><rect x="10" y="2" width="7" height="8" fill="none" stroke="#ccc" stroke-width="0.8"/></svg><div class="a" style="left:852px;top:162px;width:24px;height:24px;background:#3a3a3a;border-radius:2px"></div><div class="t" style="left:852px;width:24px;text-align:center;top:178px;font-size:5px;color:#aaa">Actual</div><svg class="a" style="left:855px;top:164px" width="18" height="14"><circle cx="6" cy="6" r="3.5" fill="none" stroke="#eee" stroke-width="1.1"/><path d="M3.5 8.5 L0.5 12" stroke="#eee" stroke-width="1.4"/><rect x="10" y="2" width="7" height="8" fill="none" stroke="#ccc" stroke-width="0.8"/></svg><div class="a" style="left:852px;top:188px;width:24px;height:24px;background:#3a3a3a;border-radius:2px"></div><div class="t" style="left:852px;width:24px;text-align:center;top:204px;font-size:5px;color:#aaa">AAHalf</div><svg class="a" style="left:855px;top:190px" width="18" height="14"><circle cx="6" cy="6" r="3.5" fill="none" stroke="#eee" stroke-width="1.1"/><path d="M3.5 8.5 L0.5 12" stroke="#eee" stroke-width="1.4"/><rect x="10" y="2" width="7" height="8" fill="none" stroke="#ccc" stroke-width="0.8"/></svg><div class="t" style="left:852px;top:216px;width:24px;text-align:center;font-size:5px;font-weight:bold;color:#ccc">Dynamic</div><svg class="a" style="left:855px;top:222px" width="18" height="10"><path d="M1 2h16M1 5h16M1 8h16M5 0v10M9 0v10M13 0v10" stroke="#aaa" stroke-width="0.7"/></svg><div class="t" style="left:852px;top:232px;width:24px;text-align:center;font-size:5px;color:#aaa">Persp</div><div class="a" style="left:852px;top:242px;width:24px;height:24px;background:#f7922c;border-radius:2px"></div><svg class="a" style="left:852px;top:242px" width="24" height="24"><path d="M7 12 H17 M12 8 V12" stroke="#3a1a00" stroke-width="1.2"/><path d="M10 9.5 L12 7.5 L14 9.5" fill="none" stroke="#3a1a00" stroke-width="1"/></svg><div class="t" style="left:852px;top:258px;width:24px;text-align:center;font-size:5px;color:#3a1a00">Floor</div><div class="a" style="left:852px;top:576px;width:24px;height:16px;background:#3a3a3a;border-radius:2px"></div><svg class="a" style="left:855px;top:577px" width="18" height="14"><path d="M2 2h3M7 2h3M12 2h3M2 12h3M7 12h3M12 12h3M2 4v2M2 8v2M15 4v2M15 8v2" stroke="#ccc" stroke-width="0.8"/><path d="M9 5v4M7 7h4" stroke="#eee" stroke-width="0.8"/></svg>
<div class="win" style="left:44px;top:133px;width:278px;height:196px">
 <div class="ttl" style="color:#f2f2f2">Photos - Reference.jpg</div>
 <div class="pink"></div>
 <svg class="a" style="left:0;top:0" width="278" height="196"><path d="M210 10h7" stroke="#dddddd" stroke-width="0.9"/><rect x="235.5" y="6.5" width="6" height="6" fill="none" stroke="#dddddd" stroke-width="0.9"/><path d="M261.5 6.5l6 6M267.5 6.5l-6 6" stroke="#dddddd" stroke-width="0.9"/><rect x="12" y="27.5" width="8" height="8" fill="#fff"/><path d="M13 28.5h2v2h-2zM16.5 28.5h2v2.5h-2z" fill="#e8055c"/><path d="M40.5 31.5h10M45.5 26.5v10" stroke="#e6e6e6" stroke-width="1.1"/><circle cx="69.5" cy="30.5" r="3.4" fill="none" stroke="#e6e6e6" stroke-width="1"/><path d="M72.0 33.0l3.5 3.5M67.7 30.5h3.6M69.5 28.7v3.6" stroke="#e6e6e6" stroke-width="1"/><circle cx="97" cy="30.5" r="3.4" fill="none" stroke="#6a6a6a" stroke-width="1"/><path d="M99.5 33.0l3.5 3.5M95.2 30.5h3.6" stroke="#6a6a6a" stroke-width="1"/><path d="M121 28.0h8M123.5 26.5h3" stroke="#e6e6e6" stroke-width="1"/><rect x="122" y="28.5" width="6" height="8" fill="none" stroke="#e6e6e6" stroke-width="1"/><path d="M124 30.0v5M126 30.0v5" stroke="#e6e6e6" stroke-width="0.7"/><path d="M152.3 36.0 L148.10000000000002 31.5 C146.3 29.5 147.8 27.0 150.0 27.3 C151.3 27.5 152.3 28.5 152.3 29.0 C152.3 28.5 153.3 27.5 154.60000000000002 27.3 C156.8 27.0 158.3 29.5 156.5 31.5 Z" fill="none" stroke="#e6e6e6" stroke-width="1"/><path d="M175.6 30.0 A4 4 0 1 1 180.6 35.5" fill="none" stroke="#e6e6e6" stroke-width="1"/><circle cx="179.6" cy="31.5" r="1" fill="#e6e6e6"/><path d="M174.1 28.5l1.5 2 2-1.5" fill="none" stroke="#e6e6e6" stroke-width="1"/><path d="M204 26.5v8h8M202 28.5h8v8M204 34.5l7-7" fill="none" stroke="#e6e6e6" stroke-width="1"/><path d="M226.0 27.5l9 8M235.0 27.5l-9 8" stroke="#e6e6e6" stroke-width="2.2"/><path d="M226.0 27.5l9 8M235.0 27.5l-9 8" stroke="#232323" stroke-width="0.6"/><path d="M240.5 31.0l2 1.8 2-1.8" fill="none" stroke="#b01040" stroke-width="1.2"/><circle cx="261" cy="32.0" r="0.8" fill="#e6e6e6"/><circle cx="265" cy="32.0" r="0.8" fill="#e6e6e6"/><circle cx="269" cy="32.0" r="0.8" fill="#e6e6e6"/><path d="M259 188l10-10M269 178h-4M269 178v4M259 188h4M259 188v-4" fill="none" stroke="#f0f0f0" stroke-width="1.1"/></svg>
 <div class="a" style="left:92px;top:45px;width:93px;height:133px;background:#fff;overflow:hidden"><svg width="94" height="133" style="position:absolute;left:0;top:0"><path d="M34 105 C40 102 50 103 53 106 L52 128 L36 128 Z" fill="#eee79c" stroke="#6a6a50" stroke-width="0.5"/><path d="M54 107 C58 105 64 106 66 109 L64 128 L55 128 Z" fill="#eee79c" stroke="#6a6a50" stroke-width="0.5"/><path d="M31 88 C38 84 58 83 65 88 C68 95 66 104 60 107 C50 109 40 108 34 104 C30 99 29 93 31 88Z" fill="#eee79c" stroke="#6a6a50" stroke-width="0.5"/><path d="M38 88 L38 104 M47 86 L47 106 M56 87 L55 105 M32 96 L64 96" stroke="#6a6a50" stroke-width="0.4"/><circle cx="63" cy="99" r="3.2" fill="#eee79c" stroke="#6a6a50" stroke-width="0.5"/><path d="M9.8 46.3 C11.7 48.5 13.6 51.8 14.6 54.5 A2.5 2.5 0 0 0 19.0 51.9 C17.1 49.7 15.2 46.4 14.2 43.7 A2.5 2.5 0 0 0 9.8 46.3Z" fill="#eee79c" stroke="#6a6a50" stroke-width="0.5"/><path d="M13.9 54.1 C16.2 59.6 18.5 67.0 19.7 72.8 A3.0 3.0 0 0 0 25.5 71.0 C23.2 65.5 20.9 58.1 19.7 52.3 A3.0 3.0 0 0 0 13.9 54.1Z" fill="#eee79c" stroke="#6a6a50" stroke-width="0.5"/><path d="M19.7 73.8 C23.2 78.4 27.4 84.9 30.2 90.1 A3.5 3.5 0 0 0 36.0 86.3 C32.5 81.7 28.3 75.2 25.5 70.0 A3.5 3.5 0 0 0 19.7 73.8Z" fill="#eee79c" stroke="#6a6a50" stroke-width="0.5"/><path d="M29.4 9.0 C30.3 15.3 30.7 23.7 30.6 30.0 A2.5 2.5 0 0 0 35.6 29.8 C34.7 23.5 34.3 15.1 34.4 8.8 A2.5 2.5 0 0 0 29.4 9.0Z" fill="#eee79c" stroke="#6a6a50" stroke-width="0.5"/><path d="M30.1 30.2 C31.3 36.5 32.2 44.9 32.4 51.2 A3.0 3.0 0 0 0 38.4 50.6 C37.2 44.3 36.3 35.9 36.1 29.6 A3.0 3.0 0 0 0 30.1 30.2Z" fill="#eee79c" stroke="#6a6a50" stroke-width="0.5"/><path d="M32.0 51.5 C34.2 61.6 36.6 75.3 37.9 85.6 A3.5 3.5 0 0 0 44.7 84.4 C42.5 74.3 40.1 60.6 38.8 50.3 A3.5 3.5 0 0 0 32.0 51.5Z" fill="#eee79c" stroke="#6a6a50" stroke-width="0.5"/><path d="M46.0 4.1 C46.8 10.8 46.5 19.7 45.3 26.3 A3.0 3.0 0 0 0 51.3 26.5 C50.5 19.8 50.8 10.9 52.0 4.3 A3.0 3.0 0 0 0 46.0 4.1Z" fill="#eee79c" stroke="#6a6a50" stroke-width="0.5"/><path d="M45.3 26.3 C45.4 33.6 45.0 43.4 44.1 50.8 A3.0 3.0 0 0 0 50.1 51.0 C50.0 43.7 50.4 33.9 51.3 26.5 A3.0 3.0 0 0 0 45.3 26.3Z" fill="#eee79c" stroke="#6a6a50" stroke-width="0.5"/><path d="M43.6 50.9 C44.1 61.4 44.1 75.5 43.6 86.0 A3.5 3.5 0 0 0 50.6 86.0 C50.1 75.5 50.1 61.4 50.6 50.9 A3.5 3.5 0 0 0 43.6 50.9Z" fill="#eee79c" stroke="#6a6a50" stroke-width="0.5"/><path d="M62.8 12.2 C62.7 18.1 62.0 26.1 60.9 32.0 A2.5 2.5 0 0 0 65.9 32.4 C66.0 26.5 66.7 18.5 67.8 12.6 A2.5 2.5 0 0 0 62.8 12.2Z" fill="#eee79c" stroke="#6a6a50" stroke-width="0.5"/><path d="M60.4 31.8 C59.9 39.6 58.5 49.9 56.9 57.5 A3.0 3.0 0 0 0 62.9 58.3 C63.4 50.5 64.8 40.2 66.4 32.6 A3.0 3.0 0 0 0 60.4 31.8Z" fill="#eee79c" stroke="#6a6a50" stroke-width="0.5"/><path d="M56.5 57.2 C55.2 65.7 52.9 77.0 50.7 85.3 A3.5 3.5 0 0 0 57.5 86.7 C58.8 78.2 61.1 66.9 63.3 58.6 A3.5 3.5 0 0 0 56.5 57.2Z" fill="#eee79c" stroke="#6a6a50" stroke-width="0.5"/><path d="M76.2 33.9 C75.8 38.7 74.4 44.7 72.7 49.1 A2.5 2.5 0 0 0 77.5 50.3 C77.9 45.5 79.3 39.5 81.0 35.1 A2.5 2.5 0 0 0 76.2 33.9Z" fill="#eee79c" stroke="#6a6a50" stroke-width="0.5"/><path d="M72.3 48.6 C71.3 53.5 68.9 59.5 66.5 63.8 A3.0 3.0 0 0 0 72.1 66.0 C73.1 61.1 75.5 55.1 77.9 50.8 A3.0 3.0 0 0 0 72.3 48.6Z" fill="#eee79c" stroke="#6a6a50" stroke-width="0.5"/><path d="M66.5 63.7 C63.9 70.5 60.2 79.3 57.1 85.8 A3.0 3.0 0 0 0 62.7 88.2 C65.3 81.4 69.0 72.6 72.1 66.1 A3.0 3.0 0 0 0 66.5 63.7Z" fill="#eee79c" stroke="#6a6a50" stroke-width="0.5"/></svg></div>
</div>
<div class="win" style="left:35px;top:344px;width:278px;height:225px">
 <div class="ttl" style="color:#e8e8e8">Photos - refereceee.jpg</div>
 <div class="pink"></div>
 <svg class="a" style="left:0;top:0" width="278" height="225"><path d="M210 10h7" stroke="#777" stroke-width="0.9"/><rect x="235.5" y="6.5" width="6" height="6" fill="none" stroke="#777" stroke-width="0.9"/><path d="M261.5 6.5l6 6M267.5 6.5l-6 6" stroke="#777" stroke-width="0.9"/><rect x="12" y="27.5" width="8" height="8" fill="#fff"/><path d="M13 28.5h2v2h-2zM16.5 28.5h2v2.5h-2z" fill="#e8055c"/><path d="M40.5 31.5h10M45.5 26.5v10" stroke="#9a9a9a" stroke-width="1.1"/><circle cx="69.5" cy="30.5" r="3.4" fill="none" stroke="#9a9a9a" stroke-width="1"/><path d="M72.0 33.0l3.5 3.5M67.7 30.5h3.6M69.5 28.7v3.6" stroke="#9a9a9a" stroke-width="1"/><circle cx="97" cy="30.5" r="3.4" fill="none" stroke="#6a6a6a" stroke-width="1"/><path d="M99.5 33.0l3.5 3.5M95.2 30.5h3.6" stroke="#6a6a6a" stroke-width="1"/><path d="M121 28.0h8M123.5 26.5h3" stroke="#9a9a9a" stroke-width="1"/><rect x="122" y="28.5" width="6" height="8" fill="none" stroke="#9a9a9a" stroke-width="1"/><path d="M124 30.0v5M126 30.0v5" stroke="#9a9a9a" stroke-width="0.7"/><path d="M152.3 36.0 L148.10000000000002 31.5 C146.3 29.5 147.8 27.0 150.0 27.3 C151.3 27.5 152.3 28.5 152.3 29.0 C152.3 28.5 153.3 27.5 154.60000000000002 27.3 C156.8 27.0 158.3 29.5 156.5 31.5 Z" fill="#fff"/><path d="M175.6 30.0 A4 4 0 1 1 180.6 35.5" fill="none" stroke="#9a9a9a" stroke-width="1"/><circle cx="179.6" cy="31.5" r="1" fill="#9a9a9a"/><path d="M174.1 28.5l1.5 2 2-1.5" fill="none" stroke="#9a9a9a" stroke-width="1"/><path d="M204 26.5v8h8M202 28.5h8v8M204 34.5l7-7" fill="none" stroke="#9a9a9a" stroke-width="1"/><path d="M226.0 27.5l9 8M235.0 27.5l-9 8" stroke="#9a9a9a" stroke-width="2.2"/><path d="M226.0 27.5l9 8M235.0 27.5l-9 8" stroke="#232323" stroke-width="0.6"/><path d="M240.5 31.0l2 1.8 2-1.8" fill="none" stroke="#b01040" stroke-width="1.2"/><circle cx="261" cy="32.0" r="0.8" fill="#9a9a9a"/><circle cx="265" cy="32.0" r="0.8" fill="#9a9a9a"/><circle cx="269" cy="32.0" r="0.8" fill="#9a9a9a"/><path d="M259 217l10-10M269 207h-4M269 207v4M259 217h4M259 217v-4" fill="none" stroke="#f0f0f0" stroke-width="1.1"/></svg>
 <div class="a" style="left:93px;top:44.5px;width:90px;height:163px;background:#fff;overflow:hidden"><svg width="90" height="163" style="position:absolute;left:0;top:0"><path d="M37 101 C43 98 52 99 55 103 C53 115 51 130 50 152 L46 152 C45 130 42 112 37 101Z" fill="#e9dfc2" stroke="#9a8a62" stroke-width="0.5"/><path d="M57 101 C61 99 66 100 67 104 C66 120 67 135 69 153 L66 153 C62 135 58 115 57 101Z" fill="#e9dfc2" stroke="#9a8a62" stroke-width="0.5"/><path d="M30 84 C36 80 58 80 65 85 C67 93 64 101 58 104 C48 106 38 104 33 100 C29 96 28 89 30 84Z" fill="#e9dfc2" stroke="#9a8a62" stroke-width="0.5"/><path d="M36 86 L37 101 M45 84 L46 104 M54 85 L53 103 M32 93 L63 94" stroke="#c8b890" stroke-width="0.6"/><path d="M8.6 41.9 C10.4 45.1 12.0 49.7 12.8 53.3 A2.0 2.0 0 0 0 16.6 51.9 C14.8 48.7 13.2 44.1 12.4 40.5 A2.0 2.0 0 0 0 8.6 41.9Z" fill="#e9dfc2" stroke="#9a8a62" stroke-width="0.5"/><path d="M12.4 53.6 C14.6 57.3 16.9 62.4 18.1 66.4 A2.5 2.5 0 0 0 22.7 64.4 C20.5 60.7 18.2 55.6 17.0 51.6 A2.5 2.5 0 0 0 12.4 53.6Z" fill="#e9dfc2" stroke="#9a8a62" stroke-width="0.5"/><path d="M17.8 67.0 C21.7 72.3 26.2 79.7 29.2 85.6 A3.0 3.0 0 0 0 34.4 82.4 C30.5 77.1 26.0 69.7 23.0 63.8 A3.0 3.0 0 0 0 17.8 67.0Z" fill="#e9dfc2" stroke="#9a8a62" stroke-width="0.5"/><path d="M30.4 8.7 C31.1 15.5 31.5 24.5 31.2 31.4 A2.0 2.0 0 0 0 35.2 31.2 C34.5 24.4 34.1 15.4 34.4 8.5 A2.0 2.0 0 0 0 30.4 8.7Z" fill="#e9dfc2" stroke="#9a8a62" stroke-width="0.5"/><path d="M30.7 31.5 C31.6 38.2 32.2 47.3 32.1 54.2 A2.5 2.5 0 0 0 37.1 53.8 C36.2 47.1 35.6 38.0 35.7 31.1 A2.5 2.5 0 0 0 30.7 31.5Z" fill="#e9dfc2" stroke="#9a8a62" stroke-width="0.5"/><path d="M31.6 54.3 C33.0 62.9 34.1 74.5 34.5 83.3 A3.0 3.0 0 0 0 40.5 82.7 C39.1 74.1 38.0 62.5 37.6 53.7 A3.0 3.0 0 0 0 31.6 54.3Z" fill="#e9dfc2" stroke="#9a8a62" stroke-width="0.5"/><path d="M46.3 5.6 C46.5 13.3 46.2 23.6 45.4 31.2 A2.0 2.0 0 0 0 49.4 31.4 C49.2 23.7 49.5 13.4 50.3 5.8 A2.0 2.0 0 0 0 46.3 5.6Z" fill="#e9dfc2" stroke="#9a8a62" stroke-width="0.5"/><path d="M44.9 31.1 C45.0 38.0 44.4 47.1 43.5 53.8 A2.5 2.5 0 0 0 48.5 54.2 C48.4 47.3 49.0 38.2 49.9 31.5 A2.5 2.5 0 0 0 44.9 31.1Z" fill="#e9dfc2" stroke="#9a8a62" stroke-width="0.5"/><path d="M43.0 53.9 C43.3 62.6 43.1 74.2 42.4 82.9 A3.0 3.0 0 0 0 48.4 83.1 C48.1 74.4 48.3 62.8 49.0 54.1 A3.0 3.0 0 0 0 43.0 53.9Z" fill="#e9dfc2" stroke="#9a8a62" stroke-width="0.5"/><path d="M62.5 11.1 C62.1 17.2 61.0 25.1 59.6 31.0 A2.0 2.0 0 0 0 63.6 31.6 C64.0 25.5 65.1 17.6 66.5 11.7 A2.0 2.0 0 0 0 62.5 11.1Z" fill="#e9dfc2" stroke="#9a8a62" stroke-width="0.5"/><path d="M59.1 30.9 C58.4 38.7 56.7 48.9 54.9 56.5 A2.5 2.5 0 0 0 59.9 57.3 C60.6 49.5 62.3 39.3 64.1 31.7 A2.5 2.5 0 0 0 59.1 30.9Z" fill="#e9dfc2" stroke="#9a8a62" stroke-width="0.5"/><path d="M54.4 56.4 C53.6 64.3 51.9 74.8 50.1 82.5 A3.0 3.0 0 0 0 56.1 83.5 C56.9 75.6 58.6 65.1 60.4 57.4 A3.0 3.0 0 0 0 54.4 56.4Z" fill="#e9dfc2" stroke="#9a8a62" stroke-width="0.5"/><path d="M73.9 26.5 C73.1 31.3 71.4 37.6 69.7 42.2 A2.0 2.0 0 0 0 73.5 43.2 C74.3 38.4 76.0 32.1 77.7 27.5 A2.0 2.0 0 0 0 73.9 26.5Z" fill="#e9dfc2" stroke="#9a8a62" stroke-width="0.5"/><path d="M69.4 42.1 C68.2 48.2 65.9 56.1 63.7 61.9 A2.2 2.2 0 0 0 68.1 63.1 C69.3 57.0 71.6 49.1 73.8 43.3 A2.2 2.2 0 0 0 69.4 42.1Z" fill="#e9dfc2" stroke="#9a8a62" stroke-width="0.5"/><path d="M63.3 61.7 C61.6 68.7 58.8 77.8 56.2 84.5 A2.8 2.8 0 0 0 61.4 86.1 C63.1 79.1 65.9 70.0 68.5 63.3 A2.8 2.8 0 0 0 63.3 61.7Z" fill="#e9dfc2" stroke="#9a8a62" stroke-width="0.5"/><text x="46" y="123" font-size="3" font-weight="bold" fill="#333" font-family="Liberation Sans">Radius</text><path d="M22 119 H40 M12 67 L20 68" stroke="#888" stroke-width="0.3"/></svg></div>
</div>
<div class="win" style="left:630px;top:268px;width:316px;height:302px">
 <div class="ttl" style="color:#e8e8e8">Photos - carpalbone.jpg</div>
 <div class="pink"></div>
 <svg class="a" style="left:0;top:0" width="316" height="302"><path d="M248 10h7" stroke="#777" stroke-width="0.9"/><rect x="273.5" y="6.5" width="6" height="6" fill="none" stroke="#777" stroke-width="0.9"/><path d="M299.5 6.5l6 6M305.5 6.5l-6 6" stroke="#777" stroke-width="0.9"/><rect x="12" y="27.5" width="8" height="8" fill="#fff"/><path d="M13 28.5h2v2h-2zM16.5 28.5h2v2.5h-2z" fill="#e8055c"/><path d="M40 31.5h10M45 26.5v10" stroke="#9a9a9a" stroke-width="1.1"/><circle cx="89" cy="30.5" r="3.4" fill="none" stroke="#9a9a9a" stroke-width="1"/><path d="M91.5 33.0l3.5 3.5M87.2 30.5h3.6M89 28.7v3.6" stroke="#9a9a9a" stroke-width="1"/><circle cx="117" cy="30.5" r="3.4" fill="none" stroke="#6a6a6a" stroke-width="1"/><path d="M119.5 33.0l3.5 3.5M115.2 30.5h3.6" stroke="#6a6a6a" stroke-width="1"/><path d="M140.5 28.0h8M143.0 26.5h3" stroke="#9a9a9a" stroke-width="1"/><rect x="141.5" y="28.5" width="6" height="8" fill="none" stroke="#9a9a9a" stroke-width="1"/><path d="M143.5 30.0v5M145.5 30.0v5" stroke="#9a9a9a" stroke-width="0.7"/><path d="M172 36.0 L167.8 31.5 C166 29.5 167.5 27.0 169.7 27.3 C171 27.5 172 28.5 172 29.0 C172 28.5 173 27.5 174.3 27.3 C176.5 27.0 178 29.5 176.2 31.5 Z" fill="none" stroke="#9a9a9a" stroke-width="1"/><path d="M195.5 30.0 A4 4 0 1 1 200.5 35.5" fill="none" stroke="#9a9a9a" stroke-width="1"/><circle cx="199.5" cy="31.5" r="1" fill="#9a9a9a"/><path d="M194.0 28.5l1.5 2 2-1.5" fill="none" stroke="#9a9a9a" stroke-width="1"/><path d="M224 26.5v8h8M222 28.5h8v8M224 34.5l7-7" fill="none" stroke="#9a9a9a" stroke-width="1"/><path d="M264.0 27.5l9 8M273.0 27.5l-9 8" stroke="#9a9a9a" stroke-width="2.2"/><path d="M264.0 27.5l9 8M273.0 27.5l-9 8" stroke="#232323" stroke-width="0.6"/><path d="M278.5 31.0l2 1.8 2-1.8" fill="none" stroke="#b01040" stroke-width="1.2"/><circle cx="299" cy="32.0" r="0.8" fill="#9a9a9a"/><circle cx="303" cy="32.0" r="0.8" fill="#9a9a9a"/><circle cx="307" cy="32.0" r="0.8" fill="#9a9a9a"/><path d="M297 294l10-10M307 284h-4M307 284v4M297 294h4M297 294v-4" fill="none" stroke="#f0f0f0" stroke-width="1.1"/></svg>
 <div class="a" style="left:46.5px;top:45px;width:223.5px;height:241px;background:#fff;overflow:hidden"><svg width="224" height="241" style="position:absolute;left:0;top:0"><path d="M128 186 C140 182 160 182 170 190 C168 200 164 208 163 220 L139 220 C138 208 132 196 128 186Z" fill="#ecb866"/><path d="M112 184 C116 181 126 182 128 186 C127 196 126 204 127 212 L114 212 C114 202 113 192 112 184Z" fill="#ecb866"/><path d="M148 195 C150 205 151 212 151 220 M118 190 C119 198 120 205 120 211" stroke="#d8943e" stroke-width="3" fill="none"/><path d="M112 160 C125 148 160 146 176 155 C180 168 176 182 165 190 C150 194 130 193 118 188 C108 180 108 168 112 160Z" fill="#ecb866"/><ellipse cx="120" cy="168" rx="6" ry="7" fill="#ecb866" stroke="#d8943e" stroke-width="0.8"/><ellipse cx="134" cy="160" rx="7" ry="6" fill="#ecb866" stroke="#d8943e" stroke-width="0.8"/><ellipse cx="150" cy="158" rx="7" ry="7" fill="#ecb866" stroke="#d8943e" stroke-width="0.8"/><ellipse cx="164" cy="162" rx="7" ry="6" fill="#ecb866" stroke="#d8943e" stroke-width="0.8"/><ellipse cx="172" cy="172" rx="5" ry="6" fill="#ecb866" stroke="#d8943e" stroke-width="0.8"/><ellipse cx="140" cy="175" rx="8" ry="7" fill="#ecb866" stroke="#d8943e" stroke-width="0.8"/><ellipse cx="158" cy="178" rx="7" ry="6" fill="#ecb866" stroke="#d8943e" stroke-width="0.8"/><ellipse cx="124" cy="182" rx="6" ry="5" fill="#ecb866" stroke="#d8943e" stroke-width="0.8"/><ellipse cx="113" cy="172" rx="5" ry="5" fill="#ecb866" stroke="#d8943e" stroke-width="0.8"/><path d="M84.9 44.6 C87.9 47.7 90.1 52.7 90.5 57.0 A4.0 4.0 0 0 0 97.7 53.8 C94.7 50.7 92.5 45.7 92.1 41.4 A4.0 4.0 0 0 0 84.9 44.6Z" fill="#ecb866" stroke="#d8943e" stroke-width="0.7"/><line x1="88.4" y1="44.8" x2="92.6" y2="54.3" stroke="#f8d8a0" stroke-width="1.8" stroke-linecap="round" opacity="0.6"/><path d="M89.2 56.6 C92.5 61.5 94.3 68.7 93.7 74.6 A5.0 5.0 0 0 0 103.5 72.2 C100.2 67.3 98.4 60.1 99.0 54.2 A5.0 5.0 0 0 0 89.2 56.6Z" fill="#ecb866" stroke="#d8943e" stroke-width="0.7"/><line x1="93.6" y1="57.8" x2="97.0" y2="71.5" stroke="#f8d8a0" stroke-width="2.1" stroke-linecap="round" opacity="0.6"/><path d="M93.2 74.6 C97.2 82.9 99.9 94.6 99.9 103.8 A5.5 5.5 0 0 0 110.7 101.4 C106.7 93.1 104.0 81.4 104.0 72.2 A5.5 5.5 0 0 0 93.2 74.6Z" fill="#ecb866" stroke="#d8943e" stroke-width="0.7"/><line x1="98.2" y1="77.2" x2="103.3" y2="99.4" stroke="#f8d8a0" stroke-width="2.4" stroke-linecap="round" opacity="0.6"/><path d="M99.0 104.3 C105.5 118.5 110.9 138.2 112.5 153.7 A6.5 6.5 0 0 0 125.1 150.3 C118.6 136.1 113.2 116.4 111.6 100.9 A6.5 6.5 0 0 0 99.0 104.3Z" fill="#ecb866" stroke="#d8943e" stroke-width="0.7"/><line x1="105.6" y1="108.9" x2="115.8" y2="146.4" stroke="#f8d8a0" stroke-width="2.8" stroke-linecap="round" opacity="0.6"/><path d="M103.9 17.5 C106.9 21.4 109.2 27.2 109.5 32.1 A4.0 4.0 0 0 0 116.9 29.3 C113.9 25.4 111.6 19.6 111.3 14.7 A4.0 4.0 0 0 0 103.9 17.5Z" fill="#ecb866" stroke="#d8943e" stroke-width="0.7"/><line x1="107.5" y1="18.2" x2="111.7" y2="29.3" stroke="#f8d8a0" stroke-width="1.8" stroke-linecap="round" opacity="0.6"/><path d="M107.7 31.4 C110.7 38.6 112.0 48.5 111.0 56.1 A5.5 5.5 0 0 0 122.0 54.7 C119.0 47.5 117.7 37.6 118.7 30.0 A5.5 5.5 0 0 0 107.7 31.4Z" fill="#ecb866" stroke="#d8943e" stroke-width="0.7"/><line x1="112.4" y1="33.8" x2="114.9" y2="52.6" stroke="#f8d8a0" stroke-width="2.4" stroke-linecap="round" opacity="0.6"/><path d="M110.6 56.2 C114.2 68.1 116.5 84.2 116.3 96.6 A6.0 6.0 0 0 0 128.1 95.0 C124.5 83.1 122.2 67.0 122.4 54.6 A6.0 6.0 0 0 0 110.6 56.2Z" fill="#ecb866" stroke="#d8943e" stroke-width="0.7"/><line x1="115.8" y1="60.4" x2="120.1" y2="91.1" stroke="#f8d8a0" stroke-width="2.8" stroke-linecap="round" opacity="0.6"/><path d="M115.8 97.0 C120.8 113.2 124.8 135.2 125.9 152.2 A6.5 6.5 0 0 0 138.7 149.8 C133.7 133.6 129.7 111.6 128.6 94.6 A6.5 6.5 0 0 0 115.8 97.0Z" fill="#ecb866" stroke="#d8943e" stroke-width="0.7"/><line x1="121.9" y1="102.7" x2="129.5" y2="144.7" stroke="#f8d8a0" stroke-width="3.1" stroke-linecap="round" opacity="0.6"/><path d="M133.9 7.7 C136.1 11.9 137.0 17.7 136.1 22.3 A4.0 4.0 0 0 0 144.1 21.1 C141.9 16.9 141.0 11.1 141.9 6.5 A4.0 4.0 0 0 0 133.9 7.7Z" fill="#ecb866" stroke="#d8943e" stroke-width="0.7"/><line x1="137.3" y1="9.0" x2="139.0" y2="20.1" stroke="#f8d8a0" stroke-width="1.8" stroke-linecap="round" opacity="0.6"/><path d="M134.6 21.9 C137.0 30.0 137.4 40.8 135.8 48.9 A5.5 5.5 0 0 0 146.8 48.5 C144.4 40.4 144.0 29.6 145.6 21.5 A5.5 5.5 0 0 0 134.6 21.9Z" fill="#ecb866" stroke="#d8943e" stroke-width="0.7"/><line x1="139.0" y1="25.0" x2="139.9" y2="45.5" stroke="#f8d8a0" stroke-width="2.4" stroke-linecap="round" opacity="0.6"/><path d="M134.8 49.0 C137.5 61.7 138.3 78.8 137.0 91.6 A6.5 6.5 0 0 0 150.0 91.0 C147.3 78.3 146.5 61.2 147.8 48.4 A6.5 6.5 0 0 0 134.8 49.0Z" fill="#ecb866" stroke="#d8943e" stroke-width="0.7"/><line x1="140.0" y1="53.9" x2="141.7" y2="86.3" stroke="#f8d8a0" stroke-width="3.1" stroke-linecap="round" opacity="0.6"/><path d="M136.5 91.3 C138.5 109.5 138.5 133.8 136.5 152.0 A7.0 7.0 0 0 0 150.5 152.0 C148.5 133.8 148.5 109.5 150.5 91.3 A7.0 7.0 0 0 0 136.5 91.3Z" fill="#ecb866" stroke="#d8943e" stroke-width="0.7"/><line x1="141.8" y1="98.6" x2="141.8" y2="144.7" stroke="#f8d8a0" stroke-width="3.5" stroke-linecap="round" opacity="0.6"/><path d="M166.5 16.8 C167.6 21.0 167.2 26.4 165.3 30.3 A4.0 4.0 0 0 0 173.3 31.1 C172.2 26.9 172.6 21.5 174.5 17.6 A4.0 4.0 0 0 0 166.5 16.8Z" fill="#ecb866" stroke="#d8943e" stroke-width="0.7"/><line x1="169.5" y1="18.7" x2="168.6" y2="29.0" stroke="#f8d8a0" stroke-width="1.8" stroke-linecap="round" opacity="0.6"/><path d="M163.8 30.4 C165.5 37.6 165.0 47.1 162.7 54.0 A5.5 5.5 0 0 0 173.7 54.6 C172.0 47.4 172.5 37.9 174.8 31.0 A5.5 5.5 0 0 0 163.8 30.4Z" fill="#ecb866" stroke="#d8943e" stroke-width="0.7"/><line x1="167.9" y1="33.5" x2="167.1" y2="51.4" stroke="#f8d8a0" stroke-width="2.4" stroke-linecap="round" opacity="0.6"/><path d="M162.2 53.6 C162.9 64.9 161.1 79.7 157.7 90.6 A6.0 6.0 0 0 0 169.7 92.0 C169.0 80.7 170.8 65.9 174.2 55.0 A6.0 6.0 0 0 0 162.2 53.6Z" fill="#ecb866" stroke="#d8943e" stroke-width="0.7"/><line x1="166.3" y1="58.6" x2="162.9" y2="86.7" stroke="#f8d8a0" stroke-width="2.8" stroke-linecap="round" opacity="0.6"/><path d="M157.3 90.3 C156.5 108.8 152.9 133.1 148.3 151.0 A6.5 6.5 0 0 0 161.1 153.0 C161.9 134.5 165.5 110.2 170.1 92.3 A6.5 6.5 0 0 0 157.3 90.3Z" fill="#ecb866" stroke="#d8943e" stroke-width="0.7"/><line x1="161.1" y1="98.4" x2="154.2" y2="144.5" stroke="#f8d8a0" stroke-width="3.1" stroke-linecap="round" opacity="0.6"/><path d="M199.7 76.9 C199.8 83.3 198.1 91.4 195.3 97.1 A4.5 4.5 0 0 0 204.1 99.1 C204.0 92.7 205.7 84.6 208.5 78.9 A4.5 4.5 0 0 0 199.7 76.9Z" fill="#ecb866" stroke="#d8943e" stroke-width="0.7"/><line x1="202.5" y1="80.1" x2="199.2" y2="95.5" stroke="#f8d8a0" stroke-width="2.1" stroke-linecap="round" opacity="0.6"/><path d="M194.2 95.6 C192.7 103.8 188.2 113.7 182.9 120.3 A6.0 6.0 0 0 0 193.9 125.3 C195.4 117.1 199.9 107.2 205.2 100.6 A6.0 6.0 0 0 0 194.2 95.6Z" fill="#ecb866" stroke="#d8943e" stroke-width="0.7"/><line x1="197.1" y1="100.5" x2="188.5" y2="119.3" stroke="#f8d8a0" stroke-width="2.8" stroke-linecap="round" opacity="0.6"/><path d="M182.5 119.1 C178.1 129.8 169.9 142.7 162.1 151.3 A7.0 7.0 0 0 0 173.9 158.7 C178.3 148.0 186.5 135.1 194.3 126.5 A7.0 7.0 0 0 0 182.5 119.1Z" fill="#ecb866" stroke="#d8943e" stroke-width="0.7"/><line x1="184.5" y1="125.7" x2="169.0" y2="150.2" stroke="#f8d8a0" stroke-width="3.5" stroke-linecap="round" opacity="0.6"/><text x="57.7" y="55" font-size="8.3" font-weight="bold" fill="#1a1a1a" font-family="Liberation Sans">Distal</text><text x="58.1" y="68.5" font-size="8.3" font-weight="bold" fill="#1a1a1a" font-family="Liberation Sans">Middle</text><text x="12.1" y="75" font-size="8.3" font-weight="bold" fill="#1a1a1a" font-family="Liberation Sans">Phalanges</text><text x="12.1" y="85.5" font-size="8.3" font-weight="bold" fill="#1a1a1a" font-family="Liberation Sans">(fingers)</text><text x="58.1" y="98.5" font-size="8.3" font-weight="bold" fill="#1a1a1a" font-family="Liberation Sans">Proximal</text><text x="12.1" y="136" font-size="8.3" font-weight="bold" fill="#1a1a1a" font-family="Liberation Sans">Metacarpals</text><text x="12.1" y="146" font-size="8.3" font-weight="bold" fill="#1a1a1a" font-family="Liberation Sans">(palm)</text><text x="48" y="167.5" font-size="8.3" font-weight="bold" fill="#1a1a1a" font-family="Liberation Sans">Hamate</text><text x="12.1" y="182" font-size="8.3" font-weight="bold" fill="#1a1a1a" font-family="Liberation Sans">Carpals</text><text x="12.1" y="192" font-size="8.3" font-weight="bold" fill="#1a1a1a" font-family="Liberation Sans">(wrist)</text><text x="48" y="180.5" font-size="8.3" font-weight="bold" fill="#1a1a1a" font-family="Liberation Sans">Pisiform</text><text x="48" y="193.5" font-size="8.3" font-weight="bold" fill="#1a1a1a" font-family="Liberation Sans">Triquetrum</text><text x="48" y="205" font-size="8.3" font-weight="bold" fill="#1a1a1a" font-family="Liberation Sans">Lunate</text><text x="48" y="218.5" font-size="8.3" font-weight="bold" fill="#1a1a1a" font-family="Liberation Sans">Ulna</text><text x="178.3" y="167.5" font-size="8.3" font-weight="bold" fill="#1a1a1a" font-family="Liberation Sans">Trapezium</text><text x="178.3" y="180.5" font-size="8.3" font-weight="bold" fill="#1a1a1a" font-family="Liberation Sans">Trapezoid</text><text x="178.3" y="193.5" font-size="8.3" font-weight="bold" fill="#1a1a1a" font-family="Liberation Sans">Scaphoid</text><text x="178.3" y="205" font-size="8.3" font-weight="bold" fill="#1a1a1a" font-family="Liberation Sans">Capitate</text><text x="137.9" y="228" font-size="8.3" font-weight="bold" fill="#1a1a1a" font-family="Liberation Sans">Radius</text><text x="104.5" y="137" font-size="7.5" font-weight="bold" fill="#1a1a1a" font-family="Liberation Sans">5</text><text x="119.5" y="129" font-size="7.5" font-weight="bold" fill="#1a1a1a" font-family="Liberation Sans">4</text><text x="134" y="124.5" font-size="7.5" font-weight="bold" fill="#1a1a1a" font-family="Liberation Sans">3</text><text x="150" y="125.5" font-size="7.5" font-weight="bold" fill="#1a1a1a" font-family="Liberation Sans">2</text><text x="172.5" y="141.5" font-size="7.5" font-weight="bold" fill="#1a1a1a" font-family="Liberation Sans">1</text><path d="M58 42 H55.5 V103 H58 M91 115 H88.5 V157 H91 M61.5 132.5 H88.5 M48 157 H45.5 V208 H48 M42 181 H45.5 M53 74 H55.5 M80 51 H88 M84 64.5 H93 M93.5 94 H103 M77.5 164 H127 M80.5 177 H97 L113 172 M91.5 190 H98 L120 180 M75 201.5 H90 L128 182 M66 215 H90 L119 201 M178 164 L172 160 L165 154 M178 177 H172 L160 162 M178 190 H172 L161 175 M178 201.5 H170 L148 166 M151 220 V214" fill="none" stroke="#333" stroke-width="0.5"/><text x="40" y="236" font-size="2.8" textLength="143" lengthAdjust="spacingAndGlyphs" fill="#555" font-family="Liberation Sans">Copyright &#169; 2009 Pearson Education, Inc., publishing as Pearson Benjamin Cummings.</text></svg></div>
</div>
</body></html>
